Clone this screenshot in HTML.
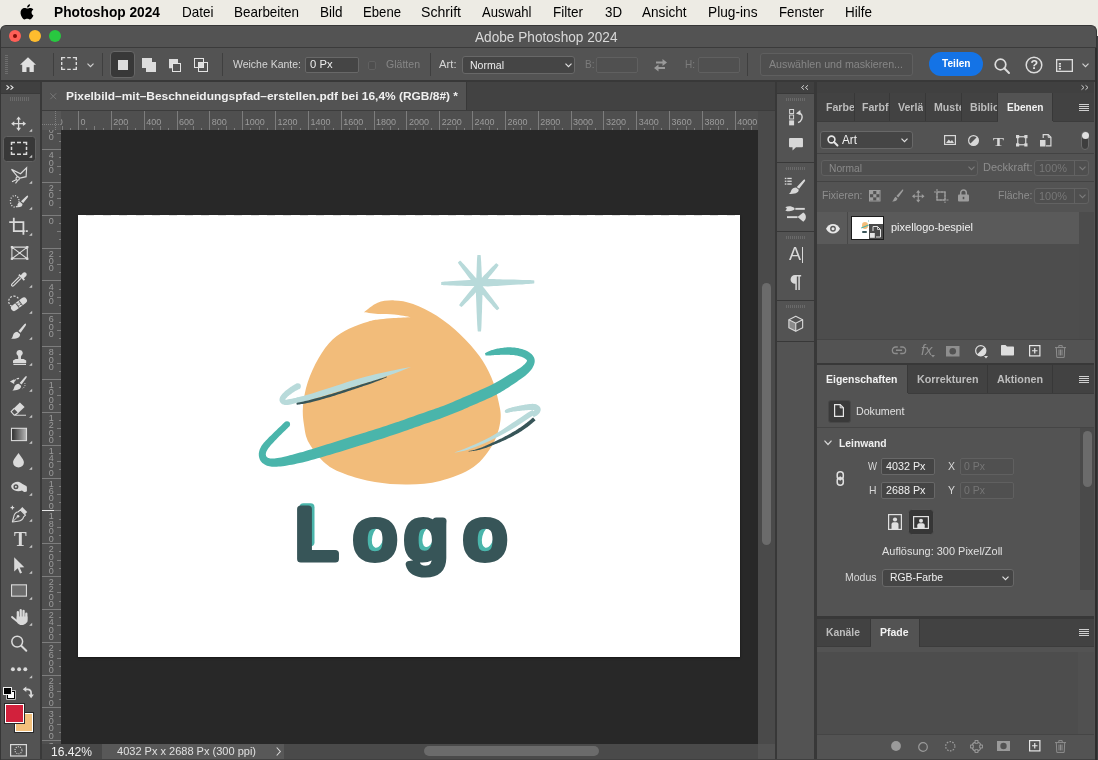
<!DOCTYPE html>
<html lang="de">
<head>
<meta charset="utf-8">
<title>Adobe Photoshop 2024</title>
<style>
*{box-sizing:border-box;margin:0;padding:0}
html,body{width:1098px;height:760px;overflow:hidden;background:#3c3c3e}
body{font-family:"Liberation Sans",sans-serif;font-size:11px;color:#d6d6d6;position:relative}
div,span,i{position:absolute}
svg{position:absolute;overflow:visible}
.inp{background:#454545;border:1px solid #686868;border-radius:2px}
.inp.dis{background:#505050;border-color:#606060}
.clip{overflow:hidden}
#root{left:0;top:0;width:1098px;height:760px;will-change:transform}

</style>
</head>
<body>
<div id="root">
<div style="position:absolute;left:0px;top:0px;width:1098px;height:36px;background:#edebe4;"></div>
<svg style="left:20.5px;top:3.5px;" width="13.5" height="16" viewBox="0 0 15 18"><path fill="#000" d="M10.1 0.3c0.1 1-0.3 1.900-0.900 2.600C8.600 3.600 7.700 4.100 6.800 4c-0.100-0.900 0.400-1.900 0.900-2.500C8.300 0.800 9.300 0.300 10.100 0.300zM13.900 12.800c-0.400 0.900-0.600 1.300-1.100 2.100-0.700 1.100-1.700 2.500-3 2.500-1.100 0-1.400-0.700-2.900-0.700-1.500 0-1.900 0.700-3 0.700-1.300 0-2.200-1.200-2.900-2.400C-0.900 11.900-1.100 8.200 0.300 6.400 1.200 5.100 2.600 4.400 3.900 4.400c1.400 0 2.200 0.700 3.300 0.700 1.100 0 1.800-0.700 3.300-0.700 1.200 0 2.400 0.600 3.300 1.700-2.900 1.600-2.400 5.700 0.100 6.700z"/></svg>
<span style="position:absolute;left:54px;top:3.1px;font-size:14.3px;line-height:18px;color:#000;white-space:nowrap;font-weight:bold;transform:scaleX(0.9597);transform-origin:0 50%;">Photoshop 2024</span>
<span style="position:absolute;left:182px;top:3.1px;font-size:14.3px;line-height:18px;color:#000;white-space:nowrap;transform:scaleX(0.9436);transform-origin:0 50%;">Datei</span>
<span style="position:absolute;left:234px;top:3.1px;font-size:14.3px;line-height:18px;color:#000;white-space:nowrap;transform:scaleX(0.9397);transform-origin:0 50%;">Bearbeiten</span>
<span style="position:absolute;left:320px;top:3.1px;font-size:14.3px;line-height:18px;color:#000;white-space:nowrap;transform:scaleX(0.9436);transform-origin:0 50%;">Bild</span>
<span style="position:absolute;left:362.5px;top:3.1px;font-size:14.3px;line-height:18px;color:#000;white-space:nowrap;transform:scaleX(0.9190);transform-origin:0 50%;">Ebene</span>
<span style="position:absolute;left:420.5px;top:3.1px;font-size:14.3px;line-height:18px;color:#000;white-space:nowrap;transform:scaleX(0.9870);transform-origin:0 50%;">Schrift</span>
<span style="position:absolute;left:481.5px;top:3.1px;font-size:14.3px;line-height:18px;color:#000;white-space:nowrap;transform:scaleX(0.9158);transform-origin:0 50%;">Auswahl</span>
<span style="position:absolute;left:553px;top:3.1px;font-size:14.3px;line-height:18px;color:#000;white-space:nowrap;transform:scaleX(0.9441);transform-origin:0 50%;">Filter</span>
<span style="position:absolute;left:604.5px;top:3.1px;font-size:14.3px;line-height:18px;color:#000;white-space:nowrap;transform:scaleX(0.9300);transform-origin:0 50%;">3D</span>
<span style="position:absolute;left:642px;top:3.1px;font-size:14.3px;line-height:18px;color:#000;white-space:nowrap;transform:scaleX(0.9489);transform-origin:0 50%;">Ansicht</span>
<span style="position:absolute;left:708px;top:3.1px;font-size:14.3px;line-height:18px;color:#000;white-space:nowrap;transform:scaleX(0.9581);transform-origin:0 50%;">Plug-ins</span>
<span style="position:absolute;left:779px;top:3.1px;font-size:14.3px;line-height:18px;color:#000;white-space:nowrap;transform:scaleX(0.9282);transform-origin:0 50%;">Fenster</span>
<span style="position:absolute;left:844.5px;top:3.1px;font-size:14.3px;line-height:18px;color:#000;white-space:nowrap;transform:scaleX(0.9438);transform-origin:0 50%;">Hilfe</span>
<div style="position:absolute;left:0px;top:24.5px;width:1096.7px;height:735.5px;background:#535353;border-radius:6px 6px 0 0;border:1px solid #363636;border-bottom:none"></div>
<div style="position:absolute;left:1px;top:47px;width:1095px;height:1px;background:#3b3b3b;"></div>
<div style="position:absolute;left:9px;top:30px;width:12px;height:12px;background:#fe5f57;border-radius:50%"></div>
<div style="position:absolute;left:29px;top:30px;width:12px;height:12px;background:#febc2e;border-radius:50%"></div>
<div style="position:absolute;left:49px;top:30px;width:12px;height:12px;background:#28c840;border-radius:50%"></div>
<div style="position:absolute;left:13px;top:34px;width:4px;height:4px;background:#7c0d08;border-radius:50%"></div>
<span style="position:absolute;left:475px;top:27.8px;font-size:14px;line-height:18px;color:#d9d9d9;white-space:nowrap;transform:scaleX(0.9737);transform-origin:0 50%;">Adobe Photoshop 2024</span>
<div style="position:absolute;left:1px;top:80px;width:1095px;height:2px;background:#383838;"></div>
<div style="position:absolute;left:5px;top:55px;width:3px;height:20px;background:transparent;background:repeating-linear-gradient(#6e6e6e 0 1px,transparent 1px 2px)"></div>
<svg style="left:20px;top:57px;" width="16" height="15" viewBox="0 0 16 15"><path fill="#e0e0e0" d="M8 0.300 0 7.800h2.200v7.200h4.300v-4.800h3v4.800h4.300V7.800H16z"/></svg>
<div style="position:absolute;left:53px;top:53px;width:1px;height:23px;background:#3f3f3f;"></div>
<svg style="left:0;top:0" width="100" height="80" viewBox="0 0 100 80"><path d="M61.0 57.6h4.2M67.2 57.6h3.60M72.8 57.6h4.2M61.0 69.4h4.2M67.2 69.4h3.60M72.8 69.4h4.2M61.7 57.6v2.6M61.7 61.90v3.20M61.7 66.80v2.6M76.3 57.6v2.6M76.3 61.90v3.20M76.3 66.80v2.6" fill="none" stroke="#dcdcdc" stroke-width="1.400"/></svg>
<svg style="left:87px;top:63px;" width="7" height="5" viewBox="0 0 7 5"><path d="M0.500 0.700 3.500 3.700 6.500 0.700" fill="none" stroke="#d0d0d0" stroke-width="1.200"/></svg>
<div style="position:absolute;left:102px;top:53px;width:1px;height:23px;background:#3f3f3f;"></div>
<div style="position:absolute;left:110.2px;top:51px;width:25.2px;height:26.8px;background:#383838;border-radius:4px;border:1px solid #676767"></div>
<div style="position:absolute;left:118px;top:60px;width:10px;height:10px;background:#dcdcdc;"></div>
<svg style="left:0;top:0" width="230" height="82" viewBox="0 0 230 82"><path fill="#dcdcdc" d="M142 58h10v4h4v10h-10v-4h-4z"/><path fill="#dcdcdc" d="M169 59h9v4h-6v5.200h-3z"/><rect x="172.500" y="63.500" width="8" height="8" fill="none" stroke="#e4e4e4" stroke-width="1"/><rect x="194.500" y="58.500" width="9" height="9" fill="none" stroke="#e4e4e4" stroke-width="1"/><rect x="198.500" y="62.500" width="9" height="9" fill="none" stroke="#e4e4e4" stroke-width="1"/><rect x="199" y="63" width="4" height="4" fill="#dcdcdc"/></svg>
<div style="position:absolute;left:222px;top:53px;width:1px;height:23px;background:#3f3f3f;"></div>
<span style="position:absolute;left:232.5px;top:56.8px;font-size:11px;line-height:14px;color:#d6d6d6;white-space:nowrap;transform:scaleX(0.9532);transform-origin:0 50%;">Weiche Kante:</span>
<div class="inp" style="position:absolute;left:305px;top:56.5px;width:54px;height:16.0px;background:#454545;"></div>
<span style="position:absolute;left:309.5px;top:56.8px;font-size:11px;line-height:14px;color:#ececec;white-space:nowrap;transform:scaleX(1.0222);transform-origin:0 50%;">0 Px</span>
<div style="position:absolute;left:367.5px;top:61px;width:8.5px;height:8.5px;background:#4e4e4e;border:1px solid #606060;border-radius:2px"></div>
<span style="position:absolute;left:385.5px;top:56.8px;font-size:11px;line-height:14px;color:#868686;white-space:nowrap;transform:scaleX(0.9587);transform-origin:0 50%;">Glätten</span>
<div style="position:absolute;left:430px;top:53px;width:1px;height:23px;background:#3f3f3f;"></div>
<span style="position:absolute;left:439px;top:56.8px;font-size:11px;line-height:14px;color:#d6d6d6;white-space:nowrap;transform:scaleX(1.0227);transform-origin:0 50%;">Art:</span>
<div class="inp" style="position:absolute;left:462px;top:55.5px;width:113px;height:18.0px;background:#454545;border-radius:3px"></div>
<span style="position:absolute;left:470px;top:57.5px;font-size:11.5px;line-height:15px;color:#ececec;white-space:nowrap;transform:scaleX(0.9174);transform-origin:0 50%;">Normal</span>
<svg style="left:565px;top:62.5px;" width="7" height="5" viewBox="0 0 7 5"><path d="M0.500 0.700 3.500 3.700 6.500 0.700" fill="none" stroke="#e0e0e0" stroke-width="1.200"/></svg>
<span style="position:absolute;left:585px;top:56.8px;font-size:11px;line-height:14px;color:#7c7c7c;white-space:nowrap;transform:scaleX(0.9141);transform-origin:0 50%;">B:</span>
<div class="inp dis" style="position:absolute;left:596px;top:56.5px;width:42px;height:16.0px;background:#505050;"></div>
<svg style="left:654px;top:58.5px;" width="13" height="12.5" viewBox="0 0 13 12.5"><path fill="#9a9a9a" d="M8.500 0 13 3.500 8.500 7V4.500H2v-2h6.500zM4.500 5.500 0 9l4.500 3.500V10H11V8H4.500z"/></svg>
<span style="position:absolute;left:685px;top:56.8px;font-size:11px;line-height:14px;color:#7c7c7c;white-space:nowrap;transform:scaleX(0.9091);transform-origin:0 50%;">H:</span>
<div class="inp dis" style="position:absolute;left:697.5px;top:56.5px;width:42.0px;height:16.0px;background:#505050;"></div>
<div style="position:absolute;left:747px;top:53px;width:1px;height:23px;background:#3f3f3f;"></div>
<div style="position:absolute;left:759.5px;top:53px;width:153.5px;height:23px;background:#4f4f4f;border:1px solid #5f5f5f;border-radius:3px"></div>
<span style="position:absolute;left:769px;top:56.8px;font-size:11px;line-height:14px;color:#868686;white-space:nowrap;transform:scaleX(0.9697);transform-origin:0 50%;">Auswählen und maskieren...</span>
<div style="position:absolute;left:929px;top:52px;width:54px;height:24px;background:#1473e6;border-radius:12px"></div>
<span style="position:absolute;left:941.5px;top:55.8px;font-size:11px;line-height:14px;color:#fff;white-space:nowrap;font-weight:bold;transform:scaleX(0.9203);transform-origin:0 50%;">Teilen</span>
<svg style="left:994px;top:57.5px;" width="16" height="16" viewBox="0 0 16 16"><circle cx="6.500" cy="6.500" r="5.300" fill="none" stroke="#dcdcdc" stroke-width="1.700"/><path d="M10.300 10.300 15 15" stroke="#dcdcdc" stroke-width="2" stroke-linecap="round"/></svg>
<svg style="left:1025px;top:56px;" width="18" height="18" viewBox="0 0 18 18"><circle cx="9" cy="9" r="7.800" fill="none" stroke="#dcdcdc" stroke-width="1.500"/></svg>
<span style="position:absolute;left:1030.6px;top:56.6px;font-size:12.5px;line-height:16px;color:#e4e4e4;white-space:nowrap;font-weight:bold;">?</span>
<svg style="left:1055.5px;top:58.5px;" width="17" height="13" viewBox="0 0 17 13"><rect x="0.650" y="0.650" width="15.700" height="11.700" fill="none" stroke="#dcdcdc" stroke-width="1.300"/><rect x="2.800" y="4" width="2.200" height="1.600" fill="#dcdcdc"/><rect x="2.800" y="6.500" width="2.200" height="1.600" fill="#dcdcdc"/><rect x="2.800" y="9" width="2.200" height="1.600" fill="#dcdcdc"/></svg>
<svg style="left:1081.5px;top:62.5px;" width="7" height="5" viewBox="0 0 7 5"><path d="M0.500 0.700 3.500 3.700 6.500 0.700" fill="none" stroke="#d0d0d0" stroke-width="1.200"/></svg>
<div style="position:absolute;left:1px;top:82px;width:38.5px;height:678px;background:#535353;"></div>
<div style="position:absolute;left:39.5px;top:82px;width:2.5px;height:678px;background:#393939;"></div>
<div style="position:absolute;left:1px;top:82px;width:38.5px;height:11px;background:#404040;"></div>
<div style="position:absolute;left:1px;top:93px;width:38.5px;height:1px;background:#3a3a3a;"></div>
<svg style="left:6px;top:85px;" width="8" height="5" viewBox="0 0 8 5"><path d="M0.500 0.300 3 2.500 0.500 4.700M4.500 0.300 7 2.500 4.500 4.700" fill="none" stroke="#e8e8e8" stroke-width="1.100"/></svg>
<div style="position:absolute;left:10px;top:97px;width:19px;height:4px;background:transparent;background:repeating-linear-gradient(90deg,#6a6a6a 0 1px,transparent 1px 2px)"></div>
<div style="position:absolute;left:3px;top:136px;width:33px;height:26px;background:#383838;border-radius:3.500px;border:1px solid #616161"></div>
<svg style="left:0;top:0" width="42" height="760" viewBox="0 0 42 760"><path d="M32.200 128.7v3.100h-3.100z" fill="#c4c4c4"/><path d="M32.200 154.7v3.100h-3.100z" fill="#c4c4c4"/><path d="M32.200 180.7v3.100h-3.100z" fill="#c4c4c4"/><path d="M32.200 206.7v3.100h-3.100z" fill="#c4c4c4"/><path d="M32.200 232.7v3.100h-3.100z" fill="#c4c4c4"/><path d="M32.200 284.7v3.100h-3.100z" fill="#c4c4c4"/><path d="M32.200 310.7v3.100h-3.100z" fill="#c4c4c4"/><path d="M32.200 336.7v3.100h-3.100z" fill="#c4c4c4"/><path d="M32.200 362.7v3.100h-3.100z" fill="#c4c4c4"/><path d="M32.200 388.7v3.100h-3.100z" fill="#c4c4c4"/><path d="M32.200 414.7v3.100h-3.100z" fill="#c4c4c4"/><path d="M32.200 440.7v3.100h-3.100z" fill="#c4c4c4"/><path d="M32.200 466.7v3.100h-3.100z" fill="#c4c4c4"/><path d="M32.200 492.7v3.100h-3.100z" fill="#c4c4c4"/><path d="M32.200 518.7v3.100h-3.100z" fill="#c4c4c4"/><path d="M32.200 544.7v3.100h-3.100z" fill="#c4c4c4"/><path d="M32.200 570.7v3.100h-3.100z" fill="#c4c4c4"/><path d="M32.200 596.7v3.100h-3.100z" fill="#c4c4c4"/><path d="M32.200 622.7v3.100h-3.100z" fill="#c4c4c4"/><path d="M32.200 675.2v3.100h-3.100z" fill="#c4c4c4"/><path d="M18.600 118.300V129.100M13.200 123.700H24" fill="none" stroke="#dadada" stroke-width="1.3" /><path d="M18.600 116.400 21 119.600H16.200zM18.600 131 21 127.800H16.200zM11.100 123.700 14.300 121.300V126.100zM26.100 123.700 22.900 121.300V126.100z" fill="#dadada" /><path d="M10.75 142.5h4.25M17.0 142.5h4.00M23.0 142.5h4.25M10.75 154.25h4.25M17.0 154.25h4.00M23.0 154.25h4.25M11.5 142.5v2.6M11.5 146.80v3.15M11.5 151.65v2.6M26.5 142.5v2.6M26.5 146.80v3.15M26.5 151.65v2.6" fill="none" stroke="#dadada" stroke-width="1.5" /><path d="M11.500 169.400 20.500 173.700 26.600 167.700 26.100 176.700 19 178.300z" fill="none" stroke="#dadada" stroke-width="1.2" stroke-linejoin="miter"/><path d="M16.600 179.600 12 181.700M17.800 180.300 15.500 183.400" fill="none" stroke="#dadada" stroke-width="1.1" /><circle cx="17.700" cy="178.600" r="1.700" fill="#535353" stroke="#dadada" stroke-width="1.100"/><ellipse cx="14.700" cy="201.300" rx="4.300" ry="5.700" fill="none" stroke="#dadada" stroke-width="1.300" stroke-dasharray="1.100 1.500"/><path d="M27.800 195.600c0.600 0.600 0.300 1.400-0.300 2.200l-4.300 5.300-2.200-1.900 5.300-5c0.500-0.500 1-0.500 1.500-0.600zM20.100 201.900l2.400 2.100c0.300 2.300-2.300 3.800-6.300 3.200 1.200-0.600 1.300-1.600 1.500-2.700 0.300-1.500 1.200-2.400 2.400-2.600z" fill="#dadada" /><path d="M13.800 217.800V231.100H24.800M9.200 222.200H23.400V234.800M25.700 231.100H27.800" fill="none" stroke="#dadada" stroke-width="1.8" /><path d="M11.900 247.100H27.300V258.800H11.900zM11.900 247.100 27.300 258.800M27.300 247.100 11.900 258.800" fill="none" stroke="#dadada" stroke-width="1.1" /><rect x="10.8" y="246.0" width="2.200" height="2.200" fill="#dadada"/><rect x="26.2" y="246.0" width="2.200" height="2.200" fill="#dadada"/><rect x="10.8" y="257.7" width="2.200" height="2.200" fill="#dadada"/><rect x="26.2" y="257.7" width="2.200" height="2.200" fill="#dadada"/><path d="M19.300 276.800 12.300 283.600c-0.900 0.900-0.900 1.700-0.500 2.100 0.400 0.400 1.300 0.400 2.100-0.400l7-7" fill="none" stroke="#dadada" stroke-width="1.2" /><path d="M18.300 275.200l1.200-1.200 1.300 1.200 2-2.100c1-1 2.400-1.100 3.300-0.200 0.900 0.900 0.800 2.300-0.200 3.300l-2.100 2 1.200 1.300-1.200 1.200z" fill="#dadada" /><path d="M18.300 298.300A5.300 5.300 0 1 0 12.600 306.500" fill="none" stroke="#dadada" stroke-width="1.200" stroke-dasharray="2 1.400"/><g transform="rotate(-37 19 304.200)"><rect x="9.800" y="301.100" width="18.400" height="6.200" rx="3.100" fill="#dadada"/><g fill="#535353"><rect x="16.600" y="301.100" width="0.900" height="6.200"/><rect x="20.600" y="301.100" width="0.900" height="6.200"/><circle cx="18.200" cy="303.200" r="0.550"/><circle cx="19.900" cy="303.200" r="0.550"/><circle cx="18.200" cy="305.300" r="0.550"/><circle cx="19.900" cy="305.300" r="0.550"/></g></g><path d="M25.700 323.600c0.600 0.500 0.400 1.300-0.100 2.100l-5 7.100-2.200-1.800 5.900-6.700c0.500-0.500 0.900-0.600 1.400-0.700zM17.300 331.700l2.700 2.300c0.700 2.900-2.600 5.300-9.100 4.800 1.500-0.700 1.700-2.200 2.100-3.600 0.600-2.200 2.300-3.500 4.300-3.500z" fill="#dadada" /><path d="M19.600 350a3.100 3.100 0 0 1 1.900 5.600c-0.500 0.500-0.600 1.500-0.500 3.300h2.600l2.600 1.500v2.500H13v-2.500l2.600-1.500h2.600c0.100-1.800 0-2.800-0.500-3.300A3.100 3.100 0 0 1 19.600 350zM13.400 363.700H26v1.300H13.400z" fill="#dadada" /><path d="M26.400 376.100c0.600 0.500 0.300 1.200-0.100 1.900l-4.700 6.600-2-1.700 5.500-6.200c0.400-0.500 0.800-0.500 1.300-0.600zM18.600 383.700l2.400 2.100c0.600 2.600-2.400 4.900-8.700 4.600 1.400-0.700 1.600-2 2-3.400 0.600-2 2.300-3.300 4.300-3.300z" fill="#dadada" /><path d="M9.900 381.600 14.200 379.200v4.800z" fill="#dadada" /><path d="M14.200 381.600c0.700-2.200 2.400-3.200 5.700-3.200" fill="none" stroke="#dadada" stroke-width="1.2" stroke-dasharray="2.600 1.100"/><path d="M24.700 383c1.100 1.800 0 4.300-2.600 6" fill="none" stroke="#dadada" stroke-width="1" stroke-dasharray="0.900 1.400"/><path d="M19.900 402.400 24.600 406.900 18.300 412.900 13.700 408.400z" fill="#dadada" /><path d="M14.200 408.500 11.100 411.700 14.400 415.300H26M14.400 415.300 18.300 412.500" fill="none" stroke="#dadada" stroke-width="1.1" stroke-linejoin="round"/><defs><linearGradient id="gr1" x1="0" x2="1" y1="0" y2="0"><stop offset="0" stop-color="#2a2a2a"/><stop offset="1" stop-color="#b8b8b8"/></linearGradient></defs><rect x="11.500" y="428.300" width="15" height="12.300" fill="url(#gr1)" stroke="#dadada" stroke-width="1.100"/><path d="M18.500 452.900c2.200 3.800 5.400 6.200 5.400 9.500a5.400 5.100 0 0 1-10.800 0c0-3.300 3.200-5.700 5.400-9.500z" fill="#dadada" /><path d="M11.400 485.300c1.200-2.400 4-3.600 6.600-3.500 1.700 0.100 2.700 1.100 4.100 1.900l3.700 2c0.800 0.400 1.100 0.900 1.100 1.800v3.800c-0.800 0.900-2.300 1-3.200 0.500l-1.700-1.300c-1.900 0.800-4.800 1.100-7.200 0.100-2.500-1-4.200-3.200-3.400-5.300z" fill="#dadada" /><circle cx="15.900" cy="486.800" r="2.500" fill="#535353"/><circle cx="15.900" cy="486.800" r="1" fill="#dadada"/><path d="M10.600 507.600H14.200M12.400 505.800V509.400" fill="none" stroke="#dadada" stroke-width="1.1" /><path d="M20.300 509.900 25.500 515.100 23.600 516.900c-0.500 2.500-2.300 3.900-5.700 4.300L12.400 522l1.300-5.100c0.600-3.200 2-4.800 4.600-5.200z" fill="none" stroke="#dadada" stroke-width="1.15" stroke-linejoin="round"/><path d="M12.800 521.600 17.500 516.900" fill="none" stroke="#dadada" stroke-width="1" /><circle cx="18.100" cy="516.300" r="1.300" fill="#dadada"/><path d="M20 509.400l2.300-2.300 4.900 4.900-2.300 2.300z" fill="#dadada" /><path d="M14.200 557.300V571.500L17.700 568.300 20 573.600 22 572.700 19.700 567.500 24.300 567.200z" fill="#dadada" /><rect x="11.550" y="584.850" width="14.900" height="11.300" fill="#6c6c6c" stroke="#dadada" stroke-width="1.100"/><rect x="16.7" y="610.9" width="2.300" height="10" rx="1.150" fill="#dadada"/><rect x="19.55" y="608.9" width="2.300" height="10" rx="1.150" fill="#dadada"/><rect x="22.4" y="609.8" width="2.300" height="10" rx="1.150" fill="#dadada"/><rect x="25.15" y="612.6" width="2.300" height="10" rx="1.150" fill="#dadada"/><path d="M16.700 616.500H27.450V619c0 3.700-2.300 6-5.500 6-2.400 0-3.800-0.900-5.100-2.800L11.300 617.700c-0.700-1.200 0.500-2.200 1.600-1.300l3.800 3.400z" fill="#dadada" /><circle cx="17.200" cy="641.600" r="5.400" fill="none" stroke="#dadada" stroke-width="1.500"/><path d="M21.200 645.700 26.300 650.800" fill="none" stroke="#dadada" stroke-width="2" stroke-linecap="round"/><circle cx="12.9" cy="669.200" r="1.950" fill="#dadada"/><circle cx="19.1" cy="669.200" r="1.950" fill="#dadada"/><circle cx="25.3" cy="669.200" r="1.950" fill="#dadada"/><path d="M25.500 689.300h2c2.500 0 3.600 1.500 3.600 3.700v2" fill="none" stroke="#dadada" stroke-width="1.7" /><path d="M22.800 689.300 26.300 686.600V692zM31.100 698.200 28.300 694.600H33.900z" fill="#dadada" /></svg>
<span style="position:absolute;left:13.9px;top:528.3px;font-size:21px;line-height:22px;color:#dadada;white-space:nowrap;font-weight:bold;transform:scaleX(0.9043);transform-origin:0 50%;font-family:'Liberation Serif',serif;">T</span>
<div style="position:absolute;left:7.2px;top:691.3px;width:7.6px;height:7.4px;background:#fff;border:1px solid #000;box-shadow:0 0 0 0.700px #e8e8e8"></div>
<div style="position:absolute;left:3.3px;top:687.4px;width:8.3px;height:8.0px;background:#000;border:1px solid #f0f0f0"></div>
<div style="position:absolute;left:14.5px;top:713.4px;width:18.9px;height:19.0px;background:#f3c07c;border:1.200px solid #fff;box-shadow:0 0 0 1px #2a2a2a"></div>
<div style="position:absolute;left:4.6px;top:703.8px;width:19.1px;height:18.8px;background:#d2213c;border:1.200px solid #fff;box-shadow:0 0 0 1px #2a2a2a"></div>
<svg style="left:10.3px;top:744.2px;" width="17" height="12.6" viewBox="0 0 17 12.6"><rect x="0.600" y="0.600" width="15.800" height="11.400" fill="none" stroke="#dadada" stroke-width="1.200"/><circle cx="8.500" cy="6.300" r="3.500" fill="none" stroke="#dadada" stroke-width="1.100" stroke-dasharray="1 1.200"/></svg>
<div style="position:absolute;left:42px;top:82px;width:732.5px;height:28px;background:#424242;"></div>
<div style="position:absolute;left:42px;top:82px;width:424px;height:28px;background:#535353;"></div>
<div style="position:absolute;left:466px;top:82px;width:1px;height:28px;background:#383838;"></div>
<div style="position:absolute;left:42px;top:109.5px;width:732.5px;height:1.0px;background:#3c3c3c;"></div>
<svg style="left:50px;top:93px;" width="6.5" height="6.5" viewBox="0 0 6.5 6.5"><path d="M0.300 0.300 6.200 6.200M6.200 0.300 0.300 6.200" stroke="#7e7e7e" stroke-width="0.800"/></svg>
<span style="position:absolute;left:66px;top:88.8px;font-size:11.5px;line-height:15px;color:#f0f0f0;white-space:nowrap;font-weight:bold;transform:scaleX(1.0379);transform-origin:0 50%;">Pixelbild&#8211;mit&#8211;Beschneidungspfad&#8211;erstellen.pdf bei 16,4% (RGB/8#) *</span>
<div style="position:absolute;left:61px;top:130px;width:697px;height:613.5px;background:#282828;"></div>
<div style="position:absolute;left:78px;top:215px;width:662px;height:442px;background:#ffffff;box-shadow:0 1px 2px rgba(0,0,0,0.500)"></div>
<div style="position:absolute;left:78px;top:215px;width:662px;height:1px;background:transparent;background:repeating-linear-gradient(90deg,transparent 0 8.400px,#e2e2e2 8.400px 16.420px)"></div>
<div style="position:absolute;left:61px;top:110.5px;width:697px;height:19.5px;background:#4f4f4f;"></div>
<div style="position:absolute;left:42px;top:130px;width:19px;height:613.5px;background:#4f4f4f;"></div>
<div class="clip" style="left:61px;top:0;width:697px;height:131px"><div style="left:-61px;top:0"><div style="position:absolute;left:61.58px;top:126px;width:1.0px;height:4px;background:#7d7d7d;"></div><div style="position:absolute;left:69.79px;top:128px;width:1.0px;height:2px;background:#7d7d7d;"></div><div style="position:absolute;left:78.0px;top:110.5px;width:1.0px;height:19.5px;background:#7d7d7d;"></div><div style="position:absolute;left:86.21px;top:128px;width:1.0px;height:2px;background:#7d7d7d;"></div><div style="position:absolute;left:94.42px;top:126px;width:1.0px;height:4px;background:#7d7d7d;"></div><div style="position:absolute;left:102.63px;top:128px;width:1.0px;height:2px;background:#7d7d7d;"></div><div style="position:absolute;left:110.84px;top:110.5px;width:1.0px;height:19.5px;background:#7d7d7d;"></div><div style="position:absolute;left:119.05px;top:128px;width:1.0px;height:2px;background:#7d7d7d;"></div><div style="position:absolute;left:127.26px;top:126px;width:1.0px;height:4px;background:#7d7d7d;"></div><div style="position:absolute;left:135.47px;top:128px;width:1.0px;height:2px;background:#7d7d7d;"></div><div style="position:absolute;left:143.68px;top:110.5px;width:1.0px;height:19.5px;background:#7d7d7d;"></div><div style="position:absolute;left:151.89px;top:128px;width:1.0px;height:2px;background:#7d7d7d;"></div><div style="position:absolute;left:160.1px;top:126px;width:1.0px;height:4px;background:#7d7d7d;"></div><div style="position:absolute;left:168.31px;top:128px;width:1.0px;height:2px;background:#7d7d7d;"></div><div style="position:absolute;left:176.52px;top:110.5px;width:1.0px;height:19.5px;background:#7d7d7d;"></div><div style="position:absolute;left:184.73px;top:128px;width:1.0px;height:2px;background:#7d7d7d;"></div><div style="position:absolute;left:192.94px;top:126px;width:1.0px;height:4px;background:#7d7d7d;"></div><div style="position:absolute;left:201.15px;top:128px;width:1.0px;height:2px;background:#7d7d7d;"></div><div style="position:absolute;left:209.36px;top:110.5px;width:1.0px;height:19.5px;background:#7d7d7d;"></div><div style="position:absolute;left:217.57px;top:128px;width:1.0px;height:2px;background:#7d7d7d;"></div><div style="position:absolute;left:225.78px;top:126px;width:1.0px;height:4px;background:#7d7d7d;"></div><div style="position:absolute;left:233.99px;top:128px;width:1.0px;height:2px;background:#7d7d7d;"></div><div style="position:absolute;left:242.2px;top:110.5px;width:1.0px;height:19.5px;background:#7d7d7d;"></div><div style="position:absolute;left:250.41px;top:128px;width:1.0px;height:2px;background:#7d7d7d;"></div><div style="position:absolute;left:258.62px;top:126px;width:1.0px;height:4px;background:#7d7d7d;"></div><div style="position:absolute;left:266.83px;top:128px;width:1.0px;height:2px;background:#7d7d7d;"></div><div style="position:absolute;left:275.04px;top:110.5px;width:1.0px;height:19.5px;background:#7d7d7d;"></div><div style="position:absolute;left:283.25px;top:128px;width:1.0px;height:2px;background:#7d7d7d;"></div><div style="position:absolute;left:291.46px;top:126px;width:1.0px;height:4px;background:#7d7d7d;"></div><div style="position:absolute;left:299.67px;top:128px;width:1.0px;height:2px;background:#7d7d7d;"></div><div style="position:absolute;left:307.88px;top:110.5px;width:1.0px;height:19.5px;background:#7d7d7d;"></div><div style="position:absolute;left:316.09px;top:128px;width:1.0px;height:2px;background:#7d7d7d;"></div><div style="position:absolute;left:324.3px;top:126px;width:1.0px;height:4px;background:#7d7d7d;"></div><div style="position:absolute;left:332.51px;top:128px;width:1.0px;height:2px;background:#7d7d7d;"></div><div style="position:absolute;left:340.72px;top:110.5px;width:1.0px;height:19.5px;background:#7d7d7d;"></div><div style="position:absolute;left:348.93px;top:128px;width:1.0px;height:2px;background:#7d7d7d;"></div><div style="position:absolute;left:357.14px;top:126px;width:1.0px;height:4px;background:#7d7d7d;"></div><div style="position:absolute;left:365.35px;top:128px;width:1.0px;height:2px;background:#7d7d7d;"></div><div style="position:absolute;left:373.56px;top:110.5px;width:1.0px;height:19.5px;background:#7d7d7d;"></div><div style="position:absolute;left:381.77px;top:128px;width:1.0px;height:2px;background:#7d7d7d;"></div><div style="position:absolute;left:389.98px;top:126px;width:1.0px;height:4px;background:#7d7d7d;"></div><div style="position:absolute;left:398.19px;top:128px;width:1.0px;height:2px;background:#7d7d7d;"></div><div style="position:absolute;left:406.4px;top:110.5px;width:1.0px;height:19.5px;background:#7d7d7d;"></div><div style="position:absolute;left:414.61px;top:128px;width:1.0px;height:2px;background:#7d7d7d;"></div><div style="position:absolute;left:422.82px;top:126px;width:1.0px;height:4px;background:#7d7d7d;"></div><div style="position:absolute;left:431.03px;top:128px;width:1.0px;height:2px;background:#7d7d7d;"></div><div style="position:absolute;left:439.24px;top:110.5px;width:1.0px;height:19.5px;background:#7d7d7d;"></div><div style="position:absolute;left:447.45px;top:128px;width:1.0px;height:2px;background:#7d7d7d;"></div><div style="position:absolute;left:455.66px;top:126px;width:1.0px;height:4px;background:#7d7d7d;"></div><div style="position:absolute;left:463.87px;top:128px;width:1.0px;height:2px;background:#7d7d7d;"></div><div style="position:absolute;left:472.08px;top:110.5px;width:1.0px;height:19.5px;background:#7d7d7d;"></div><div style="position:absolute;left:480.29px;top:128px;width:1.0px;height:2px;background:#7d7d7d;"></div><div style="position:absolute;left:488.5px;top:126px;width:1.0px;height:4px;background:#7d7d7d;"></div><div style="position:absolute;left:496.71px;top:128px;width:1.0px;height:2px;background:#7d7d7d;"></div><div style="position:absolute;left:504.92px;top:110.5px;width:1.0px;height:19.5px;background:#7d7d7d;"></div><div style="position:absolute;left:513.13px;top:128px;width:1.0px;height:2px;background:#7d7d7d;"></div><div style="position:absolute;left:521.34px;top:126px;width:1.0px;height:4px;background:#7d7d7d;"></div><div style="position:absolute;left:529.55px;top:128px;width:1.0px;height:2px;background:#7d7d7d;"></div><div style="position:absolute;left:537.76px;top:110.5px;width:1.0px;height:19.5px;background:#7d7d7d;"></div><div style="position:absolute;left:545.97px;top:128px;width:1.0px;height:2px;background:#7d7d7d;"></div><div style="position:absolute;left:554.18px;top:126px;width:1.0px;height:4px;background:#7d7d7d;"></div><div style="position:absolute;left:562.39px;top:128px;width:1.0px;height:2px;background:#7d7d7d;"></div><div style="position:absolute;left:570.6px;top:110.5px;width:1.0px;height:19.5px;background:#7d7d7d;"></div><div style="position:absolute;left:578.81px;top:128px;width:1.0px;height:2px;background:#7d7d7d;"></div><div style="position:absolute;left:587.02px;top:126px;width:1.0px;height:4px;background:#7d7d7d;"></div><div style="position:absolute;left:595.23px;top:128px;width:1.0px;height:2px;background:#7d7d7d;"></div><div style="position:absolute;left:603.44px;top:110.5px;width:1.0px;height:19.5px;background:#7d7d7d;"></div><div style="position:absolute;left:611.65px;top:128px;width:1.0px;height:2px;background:#7d7d7d;"></div><div style="position:absolute;left:619.86px;top:126px;width:1.0px;height:4px;background:#7d7d7d;"></div><div style="position:absolute;left:628.07px;top:128px;width:1.0px;height:2px;background:#7d7d7d;"></div><div style="position:absolute;left:636.28px;top:110.5px;width:1.0px;height:19.5px;background:#7d7d7d;"></div><div style="position:absolute;left:644.49px;top:128px;width:1.0px;height:2px;background:#7d7d7d;"></div><div style="position:absolute;left:652.7px;top:126px;width:1.0px;height:4px;background:#7d7d7d;"></div><div style="position:absolute;left:660.91px;top:128px;width:1.0px;height:2px;background:#7d7d7d;"></div><div style="position:absolute;left:669.12px;top:110.5px;width:1.0px;height:19.5px;background:#7d7d7d;"></div><div style="position:absolute;left:677.33px;top:128px;width:1.0px;height:2px;background:#7d7d7d;"></div><div style="position:absolute;left:685.54px;top:126px;width:1.0px;height:4px;background:#7d7d7d;"></div><div style="position:absolute;left:693.75px;top:128px;width:1.0px;height:2px;background:#7d7d7d;"></div><div style="position:absolute;left:701.96px;top:110.5px;width:1.0px;height:19.5px;background:#7d7d7d;"></div><div style="position:absolute;left:710.17px;top:128px;width:1.0px;height:2px;background:#7d7d7d;"></div><div style="position:absolute;left:718.38px;top:126px;width:1.0px;height:4px;background:#7d7d7d;"></div><div style="position:absolute;left:726.59px;top:128px;width:1.0px;height:2px;background:#7d7d7d;"></div><div style="position:absolute;left:734.8px;top:110.5px;width:1.0px;height:19.5px;background:#7d7d7d;"></div><div style="position:absolute;left:743.01px;top:128px;width:1.0px;height:2px;background:#7d7d7d;"></div><div style="position:absolute;left:751.22px;top:126px;width:1.0px;height:4px;background:#7d7d7d;"></div><span style="position:absolute;left:47.66px;top:116.8px;font-size:9px;line-height:11px;color:#9c9c9c;white-space:nowrap;">200</span><span style="position:absolute;left:80.5px;top:116.8px;font-size:9px;line-height:11px;color:#9c9c9c;white-space:nowrap;">0</span><span style="position:absolute;left:113.34px;top:116.8px;font-size:9px;line-height:11px;color:#9c9c9c;white-space:nowrap;">200</span><span style="position:absolute;left:146.18px;top:116.8px;font-size:9px;line-height:11px;color:#9c9c9c;white-space:nowrap;">400</span><span style="position:absolute;left:179.02px;top:116.8px;font-size:9px;line-height:11px;color:#9c9c9c;white-space:nowrap;">600</span><span style="position:absolute;left:211.86px;top:116.8px;font-size:9px;line-height:11px;color:#9c9c9c;white-space:nowrap;">800</span><span style="position:absolute;left:244.7px;top:116.8px;font-size:9px;line-height:11px;color:#9c9c9c;white-space:nowrap;">1000</span><span style="position:absolute;left:277.54px;top:116.8px;font-size:9px;line-height:11px;color:#9c9c9c;white-space:nowrap;">1200</span><span style="position:absolute;left:310.38px;top:116.8px;font-size:9px;line-height:11px;color:#9c9c9c;white-space:nowrap;">1400</span><span style="position:absolute;left:343.22px;top:116.8px;font-size:9px;line-height:11px;color:#9c9c9c;white-space:nowrap;">1600</span><span style="position:absolute;left:376.06px;top:116.8px;font-size:9px;line-height:11px;color:#9c9c9c;white-space:nowrap;">1800</span><span style="position:absolute;left:408.9px;top:116.8px;font-size:9px;line-height:11px;color:#9c9c9c;white-space:nowrap;">2000</span><span style="position:absolute;left:441.74px;top:116.8px;font-size:9px;line-height:11px;color:#9c9c9c;white-space:nowrap;">2200</span><span style="position:absolute;left:474.58px;top:116.8px;font-size:9px;line-height:11px;color:#9c9c9c;white-space:nowrap;">2400</span><span style="position:absolute;left:507.42px;top:116.8px;font-size:9px;line-height:11px;color:#9c9c9c;white-space:nowrap;">2600</span><span style="position:absolute;left:540.26px;top:116.8px;font-size:9px;line-height:11px;color:#9c9c9c;white-space:nowrap;">2800</span><span style="position:absolute;left:573.1px;top:116.8px;font-size:9px;line-height:11px;color:#9c9c9c;white-space:nowrap;">3000</span><span style="position:absolute;left:605.94px;top:116.8px;font-size:9px;line-height:11px;color:#9c9c9c;white-space:nowrap;">3200</span><span style="position:absolute;left:638.78px;top:116.8px;font-size:9px;line-height:11px;color:#9c9c9c;white-space:nowrap;">3400</span><span style="position:absolute;left:671.62px;top:116.8px;font-size:9px;line-height:11px;color:#9c9c9c;white-space:nowrap;">3600</span><span style="position:absolute;left:704.46px;top:116.8px;font-size:9px;line-height:11px;color:#9c9c9c;white-space:nowrap;">3800</span><span style="position:absolute;left:737.3px;top:116.8px;font-size:9px;line-height:11px;color:#9c9c9c;white-space:nowrap;">4000</span><span style="position:absolute;left:770.14px;top:116.8px;font-size:9px;line-height:11px;color:#9c9c9c;white-space:nowrap;">4200</span></div></div>
<div class="clip" style="left:0;top:130px;width:62px;height:613.5px"><div style="left:0;top:-130px"><div style="position:absolute;left:57px;top:132.7px;width:4px;height:1.0px;background:#7d7d7d;"></div><div style="position:absolute;left:59px;top:140.91px;width:2px;height:1.0px;background:#7d7d7d;"></div><div style="position:absolute;left:42px;top:149.12px;width:19px;height:1.0px;background:#7d7d7d;"></div><div style="position:absolute;left:59px;top:157.33px;width:2px;height:1.0px;background:#7d7d7d;"></div><div style="position:absolute;left:57px;top:165.54px;width:4px;height:1.0px;background:#7d7d7d;"></div><div style="position:absolute;left:59px;top:173.75px;width:2px;height:1.0px;background:#7d7d7d;"></div><div style="position:absolute;left:42px;top:181.96px;width:19px;height:1.0px;background:#7d7d7d;"></div><div style="position:absolute;left:59px;top:190.17px;width:2px;height:1.0px;background:#7d7d7d;"></div><div style="position:absolute;left:57px;top:198.38px;width:4px;height:1.0px;background:#7d7d7d;"></div><div style="position:absolute;left:59px;top:206.59px;width:2px;height:1.0px;background:#7d7d7d;"></div><div style="position:absolute;left:42px;top:214.8px;width:19px;height:1.0px;background:#7d7d7d;"></div><div style="position:absolute;left:59px;top:223.01px;width:2px;height:1.0px;background:#7d7d7d;"></div><div style="position:absolute;left:57px;top:231.22px;width:4px;height:1.0px;background:#7d7d7d;"></div><div style="position:absolute;left:59px;top:239.43px;width:2px;height:1.0px;background:#7d7d7d;"></div><div style="position:absolute;left:42px;top:247.64px;width:19px;height:1.0px;background:#7d7d7d;"></div><div style="position:absolute;left:59px;top:255.85px;width:2px;height:1.0px;background:#7d7d7d;"></div><div style="position:absolute;left:57px;top:264.06px;width:4px;height:1.0px;background:#7d7d7d;"></div><div style="position:absolute;left:59px;top:272.27px;width:2px;height:1.0px;background:#7d7d7d;"></div><div style="position:absolute;left:42px;top:280.48px;width:19px;height:1.0px;background:#7d7d7d;"></div><div style="position:absolute;left:59px;top:288.69px;width:2px;height:1.0px;background:#7d7d7d;"></div><div style="position:absolute;left:57px;top:296.9px;width:4px;height:1.0px;background:#7d7d7d;"></div><div style="position:absolute;left:59px;top:305.11px;width:2px;height:1.0px;background:#7d7d7d;"></div><div style="position:absolute;left:42px;top:313.32px;width:19px;height:1.0px;background:#7d7d7d;"></div><div style="position:absolute;left:59px;top:321.53px;width:2px;height:1.0px;background:#7d7d7d;"></div><div style="position:absolute;left:57px;top:329.74px;width:4px;height:1.0px;background:#7d7d7d;"></div><div style="position:absolute;left:59px;top:337.95px;width:2px;height:1.0px;background:#7d7d7d;"></div><div style="position:absolute;left:42px;top:346.16px;width:19px;height:1.0px;background:#7d7d7d;"></div><div style="position:absolute;left:59px;top:354.37px;width:2px;height:1.0px;background:#7d7d7d;"></div><div style="position:absolute;left:57px;top:362.58px;width:4px;height:1.0px;background:#7d7d7d;"></div><div style="position:absolute;left:59px;top:370.79px;width:2px;height:1.0px;background:#7d7d7d;"></div><div style="position:absolute;left:42px;top:379.0px;width:19px;height:1.0px;background:#7d7d7d;"></div><div style="position:absolute;left:59px;top:387.21px;width:2px;height:1.0px;background:#7d7d7d;"></div><div style="position:absolute;left:57px;top:395.42px;width:4px;height:1.0px;background:#7d7d7d;"></div><div style="position:absolute;left:59px;top:403.63px;width:2px;height:1.0px;background:#7d7d7d;"></div><div style="position:absolute;left:42px;top:411.84px;width:19px;height:1.0px;background:#7d7d7d;"></div><div style="position:absolute;left:59px;top:420.05px;width:2px;height:1.0px;background:#7d7d7d;"></div><div style="position:absolute;left:57px;top:428.26px;width:4px;height:1.0px;background:#7d7d7d;"></div><div style="position:absolute;left:59px;top:436.47px;width:2px;height:1.0px;background:#7d7d7d;"></div><div style="position:absolute;left:42px;top:444.68px;width:19px;height:1.0px;background:#7d7d7d;"></div><div style="position:absolute;left:59px;top:452.89px;width:2px;height:1.0px;background:#7d7d7d;"></div><div style="position:absolute;left:57px;top:461.1px;width:4px;height:1.0px;background:#7d7d7d;"></div><div style="position:absolute;left:59px;top:469.31px;width:2px;height:1.0px;background:#7d7d7d;"></div><div style="position:absolute;left:42px;top:477.52px;width:19px;height:1.0px;background:#7d7d7d;"></div><div style="position:absolute;left:59px;top:485.73px;width:2px;height:1.0px;background:#7d7d7d;"></div><div style="position:absolute;left:57px;top:493.94px;width:4px;height:1.0px;background:#7d7d7d;"></div><div style="position:absolute;left:59px;top:502.15px;width:2px;height:1.0px;background:#7d7d7d;"></div><div style="position:absolute;left:42px;top:510.36px;width:19px;height:1.0px;background:#7d7d7d;"></div><div style="position:absolute;left:59px;top:518.57px;width:2px;height:1.0px;background:#7d7d7d;"></div><div style="position:absolute;left:57px;top:526.78px;width:4px;height:1.0px;background:#7d7d7d;"></div><div style="position:absolute;left:59px;top:534.99px;width:2px;height:1.0px;background:#7d7d7d;"></div><div style="position:absolute;left:42px;top:543.2px;width:19px;height:1.0px;background:#7d7d7d;"></div><div style="position:absolute;left:59px;top:551.41px;width:2px;height:1.0px;background:#7d7d7d;"></div><div style="position:absolute;left:57px;top:559.62px;width:4px;height:1.0px;background:#7d7d7d;"></div><div style="position:absolute;left:59px;top:567.83px;width:2px;height:1.0px;background:#7d7d7d;"></div><div style="position:absolute;left:42px;top:576.04px;width:19px;height:1.0px;background:#7d7d7d;"></div><div style="position:absolute;left:59px;top:584.25px;width:2px;height:1.0px;background:#7d7d7d;"></div><div style="position:absolute;left:57px;top:592.46px;width:4px;height:1.0px;background:#7d7d7d;"></div><div style="position:absolute;left:59px;top:600.67px;width:2px;height:1.0px;background:#7d7d7d;"></div><div style="position:absolute;left:42px;top:608.88px;width:19px;height:1.0px;background:#7d7d7d;"></div><div style="position:absolute;left:59px;top:617.09px;width:2px;height:1.0px;background:#7d7d7d;"></div><div style="position:absolute;left:57px;top:625.3px;width:4px;height:1.0px;background:#7d7d7d;"></div><div style="position:absolute;left:59px;top:633.51px;width:2px;height:1.0px;background:#7d7d7d;"></div><div style="position:absolute;left:42px;top:641.72px;width:19px;height:1.0px;background:#7d7d7d;"></div><div style="position:absolute;left:59px;top:649.93px;width:2px;height:1.0px;background:#7d7d7d;"></div><div style="position:absolute;left:57px;top:658.14px;width:4px;height:1.0px;background:#7d7d7d;"></div><div style="position:absolute;left:59px;top:666.35px;width:2px;height:1.0px;background:#7d7d7d;"></div><div style="position:absolute;left:42px;top:674.56px;width:19px;height:1.0px;background:#7d7d7d;"></div><div style="position:absolute;left:59px;top:682.77px;width:2px;height:1.0px;background:#7d7d7d;"></div><div style="position:absolute;left:57px;top:690.98px;width:4px;height:1.0px;background:#7d7d7d;"></div><div style="position:absolute;left:59px;top:699.19px;width:2px;height:1.0px;background:#7d7d7d;"></div><div style="position:absolute;left:42px;top:707.4px;width:19px;height:1.0px;background:#7d7d7d;"></div><div style="position:absolute;left:59px;top:715.61px;width:2px;height:1.0px;background:#7d7d7d;"></div><div style="position:absolute;left:57px;top:723.82px;width:4px;height:1.0px;background:#7d7d7d;"></div><div style="position:absolute;left:59px;top:732.03px;width:2px;height:1.0px;background:#7d7d7d;"></div><div style="position:absolute;left:42px;top:740.24px;width:19px;height:1.0px;background:#7d7d7d;"></div><span style="position:absolute;left:48.8px;top:84.54px;font-size:9px;line-height:10px;color:#9c9c9c;white-space:nowrap;">8</span><span style="position:absolute;left:48.8px;top:91.89px;font-size:9px;line-height:10px;color:#9c9c9c;white-space:nowrap;">0</span><span style="position:absolute;left:48.8px;top:99.24px;font-size:9px;line-height:10px;color:#9c9c9c;white-space:nowrap;">0</span><span style="position:absolute;left:48.8px;top:117.38px;font-size:9px;line-height:10px;color:#9c9c9c;white-space:nowrap;">6</span><span style="position:absolute;left:48.8px;top:124.73px;font-size:9px;line-height:10px;color:#9c9c9c;white-space:nowrap;">0</span><span style="position:absolute;left:48.8px;top:132.08px;font-size:9px;line-height:10px;color:#9c9c9c;white-space:nowrap;">0</span><span style="position:absolute;left:48.8px;top:150.22px;font-size:9px;line-height:10px;color:#9c9c9c;white-space:nowrap;">4</span><span style="position:absolute;left:48.8px;top:157.57px;font-size:9px;line-height:10px;color:#9c9c9c;white-space:nowrap;">0</span><span style="position:absolute;left:48.8px;top:164.92px;font-size:9px;line-height:10px;color:#9c9c9c;white-space:nowrap;">0</span><span style="position:absolute;left:48.8px;top:183.06px;font-size:9px;line-height:10px;color:#9c9c9c;white-space:nowrap;">2</span><span style="position:absolute;left:48.8px;top:190.41px;font-size:9px;line-height:10px;color:#9c9c9c;white-space:nowrap;">0</span><span style="position:absolute;left:48.8px;top:197.76px;font-size:9px;line-height:10px;color:#9c9c9c;white-space:nowrap;">0</span><span style="position:absolute;left:48.8px;top:215.9px;font-size:9px;line-height:10px;color:#9c9c9c;white-space:nowrap;">0</span><span style="position:absolute;left:48.8px;top:248.74px;font-size:9px;line-height:10px;color:#9c9c9c;white-space:nowrap;">2</span><span style="position:absolute;left:48.8px;top:256.09px;font-size:9px;line-height:10px;color:#9c9c9c;white-space:nowrap;">0</span><span style="position:absolute;left:48.8px;top:263.44px;font-size:9px;line-height:10px;color:#9c9c9c;white-space:nowrap;">0</span><span style="position:absolute;left:48.8px;top:281.58px;font-size:9px;line-height:10px;color:#9c9c9c;white-space:nowrap;">4</span><span style="position:absolute;left:48.8px;top:288.93px;font-size:9px;line-height:10px;color:#9c9c9c;white-space:nowrap;">0</span><span style="position:absolute;left:48.8px;top:296.28px;font-size:9px;line-height:10px;color:#9c9c9c;white-space:nowrap;">0</span><span style="position:absolute;left:48.8px;top:314.42px;font-size:9px;line-height:10px;color:#9c9c9c;white-space:nowrap;">6</span><span style="position:absolute;left:48.8px;top:321.77px;font-size:9px;line-height:10px;color:#9c9c9c;white-space:nowrap;">0</span><span style="position:absolute;left:48.8px;top:329.12px;font-size:9px;line-height:10px;color:#9c9c9c;white-space:nowrap;">0</span><span style="position:absolute;left:48.8px;top:347.26px;font-size:9px;line-height:10px;color:#9c9c9c;white-space:nowrap;">8</span><span style="position:absolute;left:48.8px;top:354.61px;font-size:9px;line-height:10px;color:#9c9c9c;white-space:nowrap;">0</span><span style="position:absolute;left:48.8px;top:361.96px;font-size:9px;line-height:10px;color:#9c9c9c;white-space:nowrap;">0</span><span style="position:absolute;left:48.8px;top:380.1px;font-size:9px;line-height:10px;color:#9c9c9c;white-space:nowrap;">1</span><span style="position:absolute;left:48.8px;top:387.45px;font-size:9px;line-height:10px;color:#9c9c9c;white-space:nowrap;">0</span><span style="position:absolute;left:48.8px;top:394.8px;font-size:9px;line-height:10px;color:#9c9c9c;white-space:nowrap;">0</span><span style="position:absolute;left:48.8px;top:402.15px;font-size:9px;line-height:10px;color:#9c9c9c;white-space:nowrap;">0</span><span style="position:absolute;left:48.8px;top:412.94px;font-size:9px;line-height:10px;color:#9c9c9c;white-space:nowrap;">1</span><span style="position:absolute;left:48.8px;top:420.29px;font-size:9px;line-height:10px;color:#9c9c9c;white-space:nowrap;">2</span><span style="position:absolute;left:48.8px;top:427.64px;font-size:9px;line-height:10px;color:#9c9c9c;white-space:nowrap;">0</span><span style="position:absolute;left:48.8px;top:434.99px;font-size:9px;line-height:10px;color:#9c9c9c;white-space:nowrap;">0</span><span style="position:absolute;left:48.8px;top:445.78px;font-size:9px;line-height:10px;color:#9c9c9c;white-space:nowrap;">1</span><span style="position:absolute;left:48.8px;top:453.13px;font-size:9px;line-height:10px;color:#9c9c9c;white-space:nowrap;">4</span><span style="position:absolute;left:48.8px;top:460.48px;font-size:9px;line-height:10px;color:#9c9c9c;white-space:nowrap;">0</span><span style="position:absolute;left:48.8px;top:467.83px;font-size:9px;line-height:10px;color:#9c9c9c;white-space:nowrap;">0</span><span style="position:absolute;left:48.8px;top:478.62px;font-size:9px;line-height:10px;color:#9c9c9c;white-space:nowrap;">1</span><span style="position:absolute;left:48.8px;top:485.97px;font-size:9px;line-height:10px;color:#9c9c9c;white-space:nowrap;">6</span><span style="position:absolute;left:48.8px;top:493.32px;font-size:9px;line-height:10px;color:#9c9c9c;white-space:nowrap;">0</span><span style="position:absolute;left:48.8px;top:500.67px;font-size:9px;line-height:10px;color:#9c9c9c;white-space:nowrap;">0</span><span style="position:absolute;left:48.8px;top:511.46px;font-size:9px;line-height:10px;color:#9c9c9c;white-space:nowrap;">1</span><span style="position:absolute;left:48.8px;top:518.81px;font-size:9px;line-height:10px;color:#9c9c9c;white-space:nowrap;">8</span><span style="position:absolute;left:48.8px;top:526.16px;font-size:9px;line-height:10px;color:#9c9c9c;white-space:nowrap;">0</span><span style="position:absolute;left:48.8px;top:533.51px;font-size:9px;line-height:10px;color:#9c9c9c;white-space:nowrap;">0</span><span style="position:absolute;left:48.8px;top:544.3px;font-size:9px;line-height:10px;color:#9c9c9c;white-space:nowrap;">2</span><span style="position:absolute;left:48.8px;top:551.65px;font-size:9px;line-height:10px;color:#9c9c9c;white-space:nowrap;">0</span><span style="position:absolute;left:48.8px;top:559.0px;font-size:9px;line-height:10px;color:#9c9c9c;white-space:nowrap;">0</span><span style="position:absolute;left:48.8px;top:566.35px;font-size:9px;line-height:10px;color:#9c9c9c;white-space:nowrap;">0</span><span style="position:absolute;left:48.8px;top:577.14px;font-size:9px;line-height:10px;color:#9c9c9c;white-space:nowrap;">2</span><span style="position:absolute;left:48.8px;top:584.49px;font-size:9px;line-height:10px;color:#9c9c9c;white-space:nowrap;">2</span><span style="position:absolute;left:48.8px;top:591.84px;font-size:9px;line-height:10px;color:#9c9c9c;white-space:nowrap;">0</span><span style="position:absolute;left:48.8px;top:599.19px;font-size:9px;line-height:10px;color:#9c9c9c;white-space:nowrap;">0</span><span style="position:absolute;left:48.8px;top:609.98px;font-size:9px;line-height:10px;color:#9c9c9c;white-space:nowrap;">2</span><span style="position:absolute;left:48.8px;top:617.33px;font-size:9px;line-height:10px;color:#9c9c9c;white-space:nowrap;">4</span><span style="position:absolute;left:48.8px;top:624.68px;font-size:9px;line-height:10px;color:#9c9c9c;white-space:nowrap;">0</span><span style="position:absolute;left:48.8px;top:632.03px;font-size:9px;line-height:10px;color:#9c9c9c;white-space:nowrap;">0</span><span style="position:absolute;left:48.8px;top:642.82px;font-size:9px;line-height:10px;color:#9c9c9c;white-space:nowrap;">2</span><span style="position:absolute;left:48.8px;top:650.17px;font-size:9px;line-height:10px;color:#9c9c9c;white-space:nowrap;">6</span><span style="position:absolute;left:48.8px;top:657.52px;font-size:9px;line-height:10px;color:#9c9c9c;white-space:nowrap;">0</span><span style="position:absolute;left:48.8px;top:664.87px;font-size:9px;line-height:10px;color:#9c9c9c;white-space:nowrap;">0</span><span style="position:absolute;left:48.8px;top:675.66px;font-size:9px;line-height:10px;color:#9c9c9c;white-space:nowrap;">2</span><span style="position:absolute;left:48.8px;top:683.01px;font-size:9px;line-height:10px;color:#9c9c9c;white-space:nowrap;">8</span><span style="position:absolute;left:48.8px;top:690.36px;font-size:9px;line-height:10px;color:#9c9c9c;white-space:nowrap;">0</span><span style="position:absolute;left:48.8px;top:697.71px;font-size:9px;line-height:10px;color:#9c9c9c;white-space:nowrap;">0</span><span style="position:absolute;left:48.8px;top:708.5px;font-size:9px;line-height:10px;color:#9c9c9c;white-space:nowrap;">3</span><span style="position:absolute;left:48.8px;top:715.85px;font-size:9px;line-height:10px;color:#9c9c9c;white-space:nowrap;">0</span><span style="position:absolute;left:48.8px;top:723.2px;font-size:9px;line-height:10px;color:#9c9c9c;white-space:nowrap;">0</span><span style="position:absolute;left:48.8px;top:730.55px;font-size:9px;line-height:10px;color:#9c9c9c;white-space:nowrap;">0</span><span style="position:absolute;left:48.8px;top:741.34px;font-size:9px;line-height:10px;color:#9c9c9c;white-space:nowrap;">3</span><span style="position:absolute;left:48.8px;top:748.69px;font-size:9px;line-height:10px;color:#9c9c9c;white-space:nowrap;">2</span><span style="position:absolute;left:48.8px;top:756.04px;font-size:9px;line-height:10px;color:#9c9c9c;white-space:nowrap;">0</span><span style="position:absolute;left:48.8px;top:763.39px;font-size:9px;line-height:10px;color:#9c9c9c;white-space:nowrap;">0</span></div></div>
<div style="position:absolute;left:42px;top:110.5px;width:19px;height:19.5px;background:#575757;"></div>
<div style="position:absolute;left:42px;top:124px;width:19px;height:1px;background:transparent;background:repeating-linear-gradient(90deg,#808080 0 1px,transparent 1px 2px)"></div>
<div style="position:absolute;left:55px;top:110.5px;width:1px;height:19.5px;background:transparent;background:repeating-linear-gradient(#808080 0 1px,transparent 1px 2px)"></div>
<div style="position:absolute;left:42px;top:509.5px;width:12px;height:1.5px;background:#e8e8e8;"></div>
<div style="position:absolute;left:758px;top:110.5px;width:16.5px;height:633.0px;background:#4a4a4a;"></div>
<div style="position:absolute;left:761.5px;top:283px;width:9.5px;height:262px;background:#6b6b6b;border-radius:5px"></div>
<div style="position:absolute;left:42px;top:743.5px;width:732.5px;height:16.5px;background:#4a4a4a;"></div>
<div style="position:absolute;left:42px;top:743.5px;width:60px;height:16.5px;background:#484848;"></div>
<div style="position:absolute;left:102px;top:743.5px;width:182px;height:16.5px;background:#585858;"></div>
<div style="position:absolute;left:758px;top:743.5px;width:16.5px;height:16.5px;background:#535353;"></div>
<span style="position:absolute;left:51px;top:744.3px;font-size:13px;line-height:15px;color:#f0f0f0;white-space:nowrap;transform:scaleX(0.9299);transform-origin:0 50%;">16.42%</span>
<span style="position:absolute;left:117px;top:743.8px;font-size:11px;line-height:14px;color:#e0e0e0;white-space:nowrap;transform:scaleX(1.0014);transform-origin:0 50%;">4032 Px x 2688 Px (300 ppi)</span>
<svg style="left:275.5px;top:747px;" width="5" height="9" viewBox="0 0 5 9"><path d="M0.700 0.500 4.300 4.500 0.700 8.500" fill="none" stroke="#d8d8d8" stroke-width="1.100"/></svg>
<div style="position:absolute;left:424px;top:746px;width:174.5px;height:10px;background:#6b6b6b;border-radius:5px"></div>
<div style="position:absolute;left:774.5px;top:82px;width:2.5px;height:678px;background:#383838;"></div>
<svg style="left:78px;top:215px" width="662" height="442" viewBox="78 215 662 442">
<path d="M410.8 317.2C408.0 317.3 399.1 317.6 394.0 318.0C388.9 318.4 384.3 318.7 380.0 319.3C375.7 319.9 373.2 320.1 368.0 321.7C362.8 323.3 354.9 325.8 349.0 328.8C343.1 331.8 337.7 334.6 332.6 339.5C327.5 344.4 322.5 351.3 318.4 358.4C314.3 365.5 310.4 374.1 307.8 382.0C305.2 389.9 303.6 398.6 303.0 405.8C302.4 413.0 303.0 418.8 304.0 425.0C305.0 431.2 305.4 436.6 309.0 443.0C312.6 449.4 319.5 458.3 325.5 463.5C331.5 468.7 336.8 470.9 345.0 474.0C353.2 477.1 364.4 480.2 375.0 482.0C385.6 483.8 397.7 484.7 408.5 484.5C419.3 484.3 429.2 483.9 440.0 481.0C450.8 478.1 464.7 473.2 473.5 467.0C482.3 460.8 488.5 451.8 493.0 444.0C497.5 436.2 499.6 427.2 500.5 420.0C501.4 412.8 499.9 408.1 498.4 401.0C496.9 393.9 494.5 384.8 491.3 377.3C488.1 369.8 484.5 363.1 479.4 356.0C474.3 348.9 467.6 341.4 460.5 334.7C453.4 328.0 444.7 320.9 436.8 315.8C428.9 310.7 420.2 306.5 413.1 303.9C406.0 301.3 400.1 300.6 394.2 300.4C388.3 300.2 382.6 300.8 377.6 302.8C372.6 304.8 366.4 310.6 364.1 312.2C366.8 312.5 375.0 313.7 380.0 314.1C385.0 314.5 389.1 314.1 394.2 314.6C399.3 315.1 408.0 316.8 410.8 317.2Z" fill="#f2bc7a"/>
<path d="M477.5 255.0L477.4 255.3L477.3 255.7L477.3 256.2L477.2 256.9L477.1 258.0L477.0 259.6L476.9 261.9L476.8 264.8L476.7 268.1L476.6 271.6L476.4 274.9L476.3 278.0L476.3 280.7L476.2 283.3L476.1 285.8L476.0 288.3L476.0 290.8L475.9 293.3L476.0 295.8L476.1 298.3L476.2 300.7L476.3 303.2L476.4 305.8L476.5 308.6L476.6 311.6L476.8 315.0L476.9 318.4L477.1 321.7L477.2 324.6L477.4 326.9L477.5 328.5L477.6 329.6L477.6 330.4L477.7 330.8L477.8 331.2L477.9 331.5L480.9 331.5L481.0 331.2L481.1 330.8L481.1 330.3L481.2 329.6L481.3 328.5L481.4 326.9L481.5 324.6L481.6 321.7L481.7 318.4L481.8 314.9L482.0 311.6L482.1 308.5L482.1 305.8L482.2 303.2L482.3 300.7L482.4 298.2L482.4 295.7L482.5 293.2L482.4 290.7L482.3 288.2L482.2 285.8L482.1 283.3L482.0 280.7L481.9 277.9L481.8 274.9L481.6 271.5L481.5 268.1L481.3 264.8L481.2 261.9L481.0 259.6L480.9 258.0L480.8 256.9L480.8 256.1L480.7 255.7L480.6 255.3L480.5 255.0ZM441.2 284.9L441.6 285.0L442.1 285.1L442.6 285.1L443.5 285.2L444.9 285.3L446.8 285.3L449.6 285.4L453.2 285.5L457.2 285.7L461.4 285.8L465.5 285.9L469.2 286.0L472.5 286.0L475.7 286.1L478.7 286.2L481.7 286.3L484.8 286.3L487.8 286.4L490.9 286.2L493.9 286.0L496.9 285.9L499.9 285.7L503.1 285.5L506.4 285.3L510.1 285.1L514.2 284.8L518.4 284.6L522.4 284.4L526.0 284.1L528.7 283.9L530.7 283.8L532.1 283.7L532.9 283.6L533.5 283.5L533.9 283.4L534.3 283.3L534.3 280.5L533.9 280.4L533.4 280.3L532.9 280.3L532.0 280.2L530.6 280.1L528.7 280.1L525.9 280.0L522.3 279.9L518.3 279.7L514.1 279.6L510.0 279.5L506.3 279.4L503.0 279.4L499.8 279.3L496.8 279.2L493.8 279.1L490.7 279.1L487.7 279.0L484.6 279.2L481.6 279.4L478.6 279.5L475.6 279.7L472.4 279.9L469.1 280.1L465.4 280.3L461.3 280.6L457.1 280.8L453.1 281.0L449.5 281.3L446.8 281.5L444.8 281.6L443.4 281.7L442.6 281.8L442.0 281.9L441.6 282.0L441.2 282.1ZM457.9 262.4L458.0 262.7L458.1 262.9L458.3 263.3L458.6 263.8L459.1 264.5L459.9 265.6L461.0 267.1L462.4 269.0L464.0 271.1L465.7 273.3L467.3 275.5L468.8 277.5L470.2 279.2L471.5 280.9L472.7 282.5L474.0 284.0L475.2 285.6L476.4 287.2L477.8 288.8L479.1 290.3L480.4 291.8L481.7 293.3L483.1 294.9L484.5 296.6L486.1 298.5L487.9 300.5L489.8 302.6L491.6 304.6L493.1 306.4L494.4 307.7L495.3 308.7L495.9 309.3L496.3 309.7L496.6 310.0L496.9 310.1L497.1 310.3L499.3 308.5L499.2 308.2L499.1 308.0L498.9 307.6L498.6 307.1L498.1 306.4L497.3 305.3L496.2 303.8L494.8 301.9L493.2 299.8L491.5 297.6L489.9 295.4L488.4 293.4L487.0 291.7L485.7 290.0L484.5 288.4L483.2 286.9L482.0 285.3L480.8 283.7L479.4 282.1L478.1 280.6L476.8 279.1L475.5 277.6L474.1 276.0L472.7 274.3L471.1 272.4L469.3 270.4L467.4 268.3L465.6 266.3L464.1 264.5L462.8 263.2L461.9 262.2L461.3 261.6L460.9 261.2L460.6 260.9L460.3 260.8L460.1 260.6ZM496.4 263.2L496.2 263.3L496.0 263.4L495.7 263.6L495.3 264.0L494.7 264.5L493.8 265.4L492.6 266.6L491.1 268.1L489.5 269.8L487.7 271.7L486.0 273.4L484.4 275.0L483.1 276.5L481.8 277.9L480.5 279.2L479.3 280.6L478.0 281.9L476.8 283.2L475.6 284.7L474.4 286.0L473.2 287.4L472.0 288.8L470.8 290.3L469.5 291.8L468.1 293.6L466.5 295.5L464.9 297.4L463.4 299.3L462.1 301.0L461.0 302.3L460.3 303.3L459.8 303.9L459.5 304.4L459.3 304.7L459.2 304.9L459.1 305.2L461.3 307.0L461.5 306.9L461.7 306.8L462.0 306.6L462.4 306.2L463.0 305.7L463.9 304.8L465.1 303.6L466.6 302.1L468.2 300.4L470.0 298.5L471.7 296.8L473.3 295.2L474.6 293.7L475.9 292.3L477.2 291.0L478.4 289.6L479.7 288.3L480.9 287.0L482.1 285.5L483.3 284.2L484.5 282.8L485.7 281.4L486.9 279.9L488.2 278.4L489.6 276.6L491.2 274.7L492.8 272.8L494.3 270.9L495.6 269.2L496.7 267.9L497.4 266.9L497.9 266.3L498.2 265.8L498.4 265.5L498.5 265.3L498.6 265.0Z" fill="#b8dada"/>
<path d="M485.6 355.6L485.9 355.6L486.3 355.6L486.7 355.6L487.2 355.6L487.7 355.6L488.2 355.5L488.8 355.5L489.3 355.5L489.9 355.5L490.5 355.4L491.1 355.4L491.7 355.3L492.3 355.3L493.0 355.2L493.6 355.2L494.3 355.1L495.0 355.1L495.7 355.0L496.5 355.0L497.4 355.0L498.3 354.9L499.4 354.9L500.5 354.8L501.6 354.8L502.8 354.7L503.9 354.7L505.1 354.7L506.2 354.7L507.3 354.7L508.4 354.8L509.4 354.8L510.5 354.9L511.6 354.9L512.6 355.0L513.7 355.1L514.7 355.2L515.8 355.4L516.7 355.5L517.7 355.7L518.5 355.9L519.4 356.2L520.3 356.5L521.2 356.8L522.1 357.1L522.9 357.5L523.7 357.8L524.4 358.2L525.0 358.5L525.5 358.9L525.9 359.2L526.2 359.5L526.5 359.8L526.7 360.1L526.9 360.3L526.9 360.5L527.0 360.6L527.0 360.7L527.0 360.8L527.0 360.9L526.9 361.1L526.8 361.4L526.5 361.8L526.3 362.2L525.9 362.7L525.4 363.3L524.9 363.9L524.3 364.5L523.6 365.1L522.9 365.8L522.0 366.5L521.1 367.2L520.0 368.0L518.8 368.8L517.5 369.6L516.2 370.5L514.7 371.4L513.2 372.3L511.6 373.2L510.0 374.1L508.4 375.1L506.8 376.0L505.2 377.0L503.6 378.0L502.0 379.0L500.3 380.0L498.6 381.0L496.8 382.0L495.0 382.9L493.1 383.9L491.2 384.9L489.2 385.9L487.0 387.0L484.8 388.0L482.5 389.1L480.1 390.1L477.7 391.2L475.2 392.3L472.7 393.3L470.3 394.4L467.8 395.5L465.4 396.5L462.9 397.6L460.4 398.7L457.9 399.7L455.4 400.8L452.9 401.9L450.4 402.9L448.0 403.9L445.5 404.9L443.0 405.9L440.6 406.8L438.1 407.7L435.7 408.6L433.2 409.4L430.7 410.3L428.3 411.1L425.8 412.0L423.2 412.9L420.7 413.7L418.2 414.6L415.7 415.5L413.2 416.4L410.8 417.2L408.4 418.1L406.0 419.0L403.5 419.9L401.0 420.8L398.4 421.7L395.6 422.6L392.8 423.6L389.7 424.6L386.4 425.7L383.0 426.8L379.5 427.9L376.0 429.0L372.3 430.2L368.7 431.3L365.2 432.4L361.7 433.5L358.4 434.6L355.1 435.6L351.9 436.6L348.7 437.6L345.6 438.6L342.5 439.6L339.4 440.6L336.3 441.5L333.3 442.5L330.2 443.4L327.1 444.3L324.1 445.3L320.9 446.3L317.8 447.3L314.7 448.2L311.6 449.2L308.5 450.1L305.5 451.0L302.7 451.9L299.9 452.6L297.3 453.3L294.8 454.0L292.3 454.7L289.8 455.3L287.5 455.9L285.3 456.4L283.1 456.9L281.1 457.4L279.2 457.7L277.5 458.0L275.9 458.3L274.6 458.4L273.4 458.5L272.3 458.5L271.4 458.5L270.7 458.5L270.0 458.4L269.4 458.2L268.9 458.1L268.3 457.9L267.8 457.7L267.5 457.5L267.2 457.3L266.9 457.1L266.7 456.9L266.5 456.6L266.3 456.3L266.1 455.9L266.0 455.5L265.9 455.1L265.8 454.7L265.8 454.3L265.8 453.9L265.9 453.4L266.0 452.9L266.1 452.4L266.3 451.8L266.6 451.2L267.0 450.5L267.4 449.7L267.9 449.0L268.5 448.1L269.2 447.2L270.0 446.2L270.9 445.1L271.9 444.0L272.9 442.9L274.0 441.8L275.1 440.6L276.2 439.4L277.3 438.3L278.5 437.1L279.7 435.8L281.1 434.5L282.5 433.1L283.8 431.7L285.2 430.5L286.4 429.2L287.5 428.2L288.4 427.2L289.2 426.5L284.8 422.1L284.1 422.8L283.2 423.6L282.0 424.7L280.8 425.9L279.4 427.2L278.0 428.5L276.6 429.9L275.2 431.2L273.9 432.5L272.7 433.7L271.5 434.9L270.4 436.0L269.2 437.1L268.1 438.3L267.0 439.4L265.9 440.6L264.8 441.7L263.8 442.8L262.9 443.9L262.1 445.0L261.4 446.1L260.8 447.2L260.3 448.2L259.8 449.2L259.5 450.2L259.2 451.2L259.0 452.2L258.8 453.3L258.8 454.3L258.8 455.3L258.9 456.3L259.1 457.3L259.4 458.3L259.7 459.3L260.2 460.2L260.8 461.2L261.5 462.1L262.3 462.9L263.2 463.6L264.2 464.3L265.1 464.8L266.0 465.3L267.0 465.7L268.1 466.0L269.3 466.3L270.6 466.6L271.9 466.7L273.4 466.8L275.0 466.8L276.7 466.7L278.5 466.6L280.5 466.4L282.6 466.2L284.8 465.9L287.1 465.5L289.4 465.1L291.9 464.7L294.5 464.2L297.1 463.6L299.7 463.1L302.5 462.4L305.3 461.7L308.3 460.9L311.4 460.0L314.5 459.2L317.6 458.3L320.8 457.4L324.0 456.5L327.1 455.6L330.3 454.7L333.3 453.8L336.4 452.8L339.5 451.9L342.6 451.0L345.7 450.0L348.8 449.0L352.0 448.1L355.2 447.1L358.4 446.1L361.6 445.0L365.0 444.0L368.5 442.9L372.0 441.8L375.7 440.6L379.3 439.5L382.9 438.4L386.4 437.2L389.8 436.1L393.1 435.1L396.2 434.0L399.2 433.0L402.0 432.1L404.7 431.1L407.2 430.2L409.7 429.3L412.1 428.5L414.5 427.6L416.9 426.7L419.4 425.9L421.8 425.0L424.3 424.1L426.8 423.3L429.3 422.4L431.8 421.6L434.3 420.7L436.8 419.8L439.4 418.9L441.9 418.0L444.4 417.1L447.0 416.1L449.5 415.1L452.1 414.1L454.6 413.1L457.2 412.0L459.7 410.9L462.3 409.9L464.8 408.8L467.3 407.7L469.7 406.6L472.2 405.5L474.6 404.5L477.1 403.4L479.6 402.3L482.1 401.3L484.5 400.2L487.0 399.1L489.4 398.0L491.7 396.9L494.0 395.8L496.2 394.7L498.3 393.6L500.3 392.4L502.2 391.3L504.1 390.2L505.8 389.1L507.6 388.0L509.2 386.9L510.8 385.8L512.4 384.8L514.0 383.7L515.5 382.7L517.0 381.7L518.5 380.6L520.0 379.6L521.5 378.5L522.9 377.5L524.3 376.4L525.6 375.4L526.9 374.3L528.0 373.3L529.0 372.2L529.9 371.2L530.8 370.2L531.6 369.2L532.3 368.2L532.9 367.1L533.4 366.1L533.9 365.1L534.2 364.0L534.5 362.9L534.7 361.7L534.7 360.6L534.6 359.4L534.3 358.3L533.9 357.3L533.4 356.4L532.8 355.5L532.1 354.8L531.5 354.1L530.7 353.4L529.9 352.8L529.0 352.2L528.0 351.6L527.0 351.1L526.0 350.6L524.9 350.1L523.8 349.7L522.7 349.3L521.6 349.0L520.5 348.7L519.3 348.4L518.1 348.1L516.9 347.9L515.7 347.7L514.5 347.6L513.3 347.5L512.1 347.4L510.9 347.3L509.7 347.2L508.4 347.2L507.2 347.3L505.9 347.4L504.6 347.5L503.4 347.7L502.1 347.9L500.9 348.0L499.7 348.2L498.6 348.4L497.6 348.6L496.6 348.8L495.7 349.0L494.8 349.2L494.0 349.4L493.3 349.7L492.5 349.9L491.9 350.1L491.2 350.3L490.6 350.5L490.1 350.7L489.5 351.0L488.9 351.2L488.3 351.4L487.8 351.7L487.3 351.9L486.8 352.2L486.3 352.4L485.9 352.7L485.5 352.9L485.2 353.1L485.0 353.2ZM283.9 424.3a3.10 3.10 0 1 0 6.20 0a3.10 3.10 0 1 0 -6.20 0Z" fill="#4ab5ab"/>
<path d="M411 367C403 368.300 396 369.900 389.200 371.300C380 373.200 372 375.200 365.500 376.800C357 379 349 381.500 341.800 383.900C333 386.800 325 389.300 318.100 391.400C311 393.700 305 395.500 300.800 396.600C296 398 291 399.200 286.600 399.700L297.600 403.200C305 401.800 311 399.700 318.100 397.400C330 393.800 340 391 349.700 387.900C358 385.300 366 383 373.400 380.800C379 379 384 377.100 389.200 375.300C396 372.800 403 370.200 411 367Z" fill="#b8dada"/><path d="M296.3 383.6L296.0 383.8L295.7 384.0L295.2 384.2L294.7 384.5L294.1 384.8L293.5 385.2L292.8 385.6L292.2 386.0L291.5 386.4L290.8 386.8L290.2 387.2L289.6 387.7L288.9 388.2L288.2 388.7L287.6 389.2L286.9 389.7L286.2 390.2L285.5 390.8L284.9 391.3L284.3 391.9L283.8 392.4L283.2 393.0L282.7 393.5L282.2 394.1L281.7 394.7L281.2 395.3L280.8 395.9L280.4 396.5L280.1 397.1L279.8 397.9L279.6 398.6L279.5 399.4L279.5 400.2L279.6 400.9L279.9 401.6L280.2 402.3L280.6 402.8L281.1 403.3L281.5 403.7L282.1 404.1L282.7 404.4L283.4 404.6L284.0 404.8L284.6 404.9L285.2 405.0L285.8 405.0L286.4 405.0L287.0 405.0L287.6 404.9L288.2 404.9L288.9 404.8L289.5 404.7L290.2 404.6L290.9 404.4L291.6 404.3L292.2 404.1L292.9 403.9L293.5 403.7L294.1 403.6L294.7 403.4L295.2 403.2L295.9 403.0L296.5 402.8L297.1 402.6L297.6 402.4L298.2 402.2L298.7 402.0L299.1 401.8L299.4 401.7L299.7 401.5L298.3 397.3L298.0 397.3L297.6 397.4L297.1 397.6L296.7 397.7L296.1 397.9L295.6 398.0L295.0 398.2L294.4 398.3L293.9 398.5L293.3 398.6L292.8 398.7L292.2 398.9L291.6 399.0L291.0 399.2L290.4 399.3L289.8 399.4L289.2 399.5L288.7 399.6L288.2 399.7L287.8 399.7L287.3 399.7L286.9 399.7L286.4 399.7L286.0 399.7L285.7 399.7L285.4 399.6L285.1 399.6L285.0 399.5L284.9 399.5L284.9 399.5L284.9 399.5L284.9 399.5L284.9 399.5L284.9 399.5L285.0 399.5L285.0 399.6L285.0 399.6L285.0 399.7L285.0 399.7L285.0 399.7L285.1 399.6L285.2 399.4L285.4 399.1L285.7 398.7L286.1 398.3L286.5 397.9L286.9 397.5L287.3 397.0L287.8 396.6L288.3 396.1L288.8 395.7L289.3 395.3L289.8 394.8L290.4 394.4L291.1 393.9L291.7 393.5L292.3 393.0L293.0 392.6L293.6 392.2L294.2 391.8L294.7 391.5L295.3 391.1L295.8 390.8L296.4 390.5L297.0 390.2L297.5 389.9L298.1 389.6L298.5 389.4L299.0 389.2L299.3 389.0ZM294.7 386.3a3.10 3.10 0 1 0 6.20 0a3.10 3.10 0 1 0 -6.20 0Z" fill="#b8dada"/><path d="M297.6 404.7L298.3 404.6L299.2 404.4L300.2 404.3L301.4 404.1L302.7 403.9L304.0 403.7L305.5 403.4L307.1 403.1L308.7 402.8L310.3 402.4L312.0 402.0L313.8 401.5L315.8 401.0L317.8 400.5L319.9 399.9L322.0 399.3L324.1 398.7L326.2 398.1L328.3 397.5L330.4 396.9L332.4 396.3L334.4 395.7L336.4 395.0L338.5 394.3L340.5 393.7L342.5 393.0L344.5 392.4L346.5 391.7L348.5 391.1L350.4 390.4L352.3 389.8L354.2 389.2L356.1 388.5L358.0 387.9L359.8 387.3L361.7 386.7L363.4 386.1L365.1 385.5L366.8 385.0L368.3 384.4L369.8 383.9L371.2 383.4L372.5 383.0L373.8 382.5L375.0 382.1L376.1 381.6L377.2 381.2L378.3 380.8L379.3 380.4L380.2 380.1L381.2 379.7L382.0 379.3L382.9 378.9L383.7 378.6L384.4 378.3L385.1 378.0L385.7 377.7L386.2 377.4L386.7 377.2L387.1 377.0L386.9 376.6L386.5 376.7L386.0 376.8L385.4 377.0L384.8 377.2L384.1 377.4L383.3 377.7L382.5 377.9L381.6 378.2L380.7 378.5L379.8 378.7L378.8 379.1L377.8 379.4L376.7 379.7L375.6 380.1L374.4 380.4L373.2 380.8L371.9 381.2L370.6 381.7L369.2 382.1L367.7 382.6L366.1 383.0L364.5 383.6L362.8 384.1L361.0 384.6L359.2 385.2L357.3 385.8L355.4 386.4L353.5 387.0L351.5 387.6L349.6 388.2L347.7 388.8L345.8 389.4L343.8 390.0L341.8 390.7L339.7 391.4L337.7 392.0L335.7 392.7L333.7 393.3L331.6 393.9L329.6 394.5L327.6 395.1L325.5 395.7L323.4 396.3L321.3 396.9L319.2 397.5L317.1 398.1L315.1 398.6L313.2 399.1L311.4 399.6L309.7 400.0L308.1 400.4L306.6 400.8L305.0 401.1L303.6 401.4L302.2 401.7L301.0 401.9L299.8 402.2L298.8 402.4L297.9 402.6L297.2 402.7ZM296.4 403.7a1.00 1.00 0 1 0 2.00 0a1.00 1.00 0 1 0 -2.00 0Z" fill="#375558"/>
<path d="M454.100 452.500C461 450.200 468 447.300 475.300 444.200C482 441.300 488 438.200 493.700 435C500 431.300 506 427.200 512.100 423C516 420.500 520 417.800 523.200 415.700C526 413.800 529 412 532.400 410.100L536.500 413.500C532 416 527 419.500 523.200 422.100C517 426.300 511 429.800 504.700 433.200C498 436.800 491 440.300 484.500 443.300C479 445.800 473 448 467.900 449.700C463 451.200 458 452.200 454.100 452.500Z" fill="#b8dada"/><path d="M507.0 412.9L507.4 412.9L507.8 412.8L508.3 412.7L508.8 412.5L509.4 412.4L510.0 412.2L510.6 412.1L511.2 412.0L511.9 411.9L512.5 411.7L513.1 411.6L513.8 411.6L514.5 411.5L515.3 411.4L516.0 411.3L516.8 411.2L517.6 411.1L518.4 411.0L519.1 410.9L519.9 410.9L520.6 410.8L521.4 410.7L522.2 410.6L522.9 410.5L523.7 410.5L524.4 410.4L525.1 410.3L525.9 410.3L526.6 410.2L527.3 410.2L528.0 410.1L528.8 410.1L529.5 410.0L530.3 410.0L531.0 409.9L531.6 409.9L532.2 409.9L532.7 409.9L533.1 410.0L533.4 410.0L533.7 410.1L534.0 410.2L534.2 410.3L534.5 410.4L534.7 410.5L534.8 410.6L534.9 410.7L534.8 410.7L534.8 410.6L534.7 410.3L534.6 409.8L534.7 409.5L534.7 409.4L534.7 409.5L534.7 409.7L534.6 409.9L534.5 410.2L534.3 410.5L534.1 410.8L534.0 411.0L533.9 411.2L533.7 411.4L533.5 411.7L533.2 411.9L532.8 412.2L532.5 412.5L532.1 412.8L531.8 413.0L531.5 413.3L531.3 413.5L533.7 417.1L533.9 417.1L534.2 416.9L534.6 416.8L535.0 416.6L535.5 416.3L536.0 416.1L536.5 415.8L537.0 415.4L537.5 415.0L538.0 414.6L538.4 414.2L538.8 413.8L539.1 413.4L539.5 412.9L539.8 412.4L540.1 411.8L540.4 411.2L540.6 410.4L540.7 409.4L540.5 408.3L540.2 407.5L539.7 406.8L539.2 406.2L538.6 405.7L538.0 405.3L537.4 404.9L536.7 404.6L536.0 404.3L535.3 404.1L534.6 404.0L533.7 403.9L532.9 403.8L532.1 403.8L531.3 403.9L530.5 404.0L529.7 404.0L529.0 404.1L528.2 404.2L527.4 404.3L526.7 404.4L526.0 404.5L525.2 404.6L524.4 404.8L523.7 404.9L522.9 405.0L522.1 405.2L521.4 405.3L520.6 405.4L519.9 405.6L519.1 405.7L518.4 405.9L517.6 406.0L516.8 406.2L516.0 406.4L515.2 406.5L514.4 406.7L513.7 406.9L512.9 407.1L512.2 407.3L511.5 407.5L510.8 407.7L510.1 407.9L509.5 408.1L508.8 408.3L508.2 408.6L507.6 408.8L507.1 409.0L506.6 409.2L506.3 409.3L506.0 409.5ZM504.7 411.2a1.80 1.80 0 1 0 3.60 0a1.80 1.80 0 1 0 -3.60 0Z" fill="#b8dada"/><path d="M533.1 417.5L532.7 417.8L532.2 418.2L531.7 418.6L531.1 419.2L530.4 419.7L529.8 420.3L529.0 420.9L528.3 421.5L527.6 422.1L526.8 422.7L526.1 423.3L525.3 423.8L524.5 424.4L523.7 425.0L522.9 425.7L522.0 426.3L521.1 426.9L520.3 427.5L519.4 428.1L518.5 428.6L517.6 429.2L516.7 429.8L515.8 430.4L514.8 430.9L513.9 431.5L512.9 432.1L512.0 432.6L511.0 433.2L510.1 433.7L509.2 434.2L508.3 434.7L507.4 435.2L506.5 435.7L505.7 436.1L504.8 436.6L504.0 437.0L503.1 437.5L502.2 437.9L501.3 438.4L500.4 438.8L499.4 439.3L498.4 439.8L497.4 440.3L496.4 440.8L495.4 441.2L494.4 441.7L493.4 442.2L492.4 442.6L491.5 443.1L490.5 443.5L489.6 443.9L488.8 444.3L487.9 444.7L487.1 445.1L486.2 445.5L485.4 445.8L484.6 446.2L483.9 446.5L483.1 446.8L482.3 447.2L481.5 447.5L480.8 447.8L480.0 448.0L479.2 448.3L478.5 448.6L477.7 448.8L477.0 449.1L476.3 449.3L475.6 449.5L474.9 449.7L474.2 449.9L473.4 450.1L472.7 450.3L472.0 450.4L471.2 450.6L470.5 450.7L469.9 450.8L469.3 451.0L468.9 451.1L468.5 451.2L468.5 451.4L468.9 451.4L469.4 451.4L470.0 451.3L470.6 451.3L471.3 451.2L472.1 451.1L472.8 451.0L473.6 450.9L474.4 450.8L475.1 450.7L475.8 450.6L476.6 450.4L477.3 450.3L478.1 450.1L478.9 449.9L479.7 449.7L480.5 449.5L481.3 449.3L482.1 449.1L482.9 448.8L483.7 448.6L484.5 448.3L485.4 448.0L486.2 447.7L487.1 447.4L487.9 447.1L488.8 446.8L489.7 446.4L490.5 446.1L491.5 445.7L492.4 445.3L493.4 444.9L494.4 444.5L495.5 444.1L496.5 443.7L497.6 443.3L498.6 442.8L499.6 442.4L500.6 442.0L501.6 441.6L502.6 441.1L503.5 440.7L504.4 440.3L505.3 439.9L506.2 439.5L507.1 439.0L508.0 438.6L509.0 438.1L509.9 437.7L510.8 437.2L511.8 436.7L512.7 436.2L513.7 435.7L514.7 435.1L515.7 434.6L516.7 434.0L517.6 433.5L518.6 432.9L519.6 432.3L520.5 431.8L521.4 431.2L522.3 430.6L523.2 430.0L524.1 429.3L525.0 428.7L525.9 428.1L526.8 427.5L527.6 426.9L528.4 426.3L529.2 425.7L529.9 425.1L530.7 424.5L531.5 423.8L532.2 423.2L532.9 422.6L533.6 422.0L534.2 421.5L534.7 421.0L535.2 420.7L535.5 420.3Z" fill="#375558"/>
<rect x="299.500" y="503.200" width="15" height="43" rx="4" fill="#4ab5ab"/>
<g fill="#4ab5ab"><rect x="366" y="527" width="17" height="25"/><rect x="417" y="527" width="16" height="24"/><rect x="476" y="527" width="17" height="25"/></g>
<g fill="#fff"><ellipse cx="377.800" cy="537.500" rx="5.600" ry="10.500" transform="rotate(14 377.800 537.500)"/><ellipse cx="428.200" cy="537" rx="5.400" ry="10.300" transform="rotate(14 428.200 537)"/><ellipse cx="487.800" cy="537.500" rx="5.600" ry="10.500" transform="rotate(14 487.800 537.500)"/></g>
<g font-family="'Liberation Sans',sans-serif" font-size="72" stroke-linejoin="round" stroke-linecap="round" transform="scale(1.08 1)">
<text x="272.7 327.3 374.5 429.2" y="559.200" fill="#375558" stroke="#375558" stroke-width="7">Logo</text>
</g>
</svg>
<div style="position:absolute;left:777px;top:82px;width:317px;height:678px;background:#535353;"></div>
<div style="position:absolute;left:1094.5px;top:48px;width:2.5px;height:712px;background:#2e2e2e;"></div>
<div style="position:absolute;left:777px;top:82px;width:317px;height:11px;background:#404040;"></div>
<svg style="left:801px;top:85px;" width="8" height="5" viewBox="0 0 8 5"><path d="M3 0.300 0.500 2.500 3 4.700M7 0.300 4.500 2.500 7 4.700" fill="none" stroke="#cfcfcf" stroke-width="1"/></svg>
<svg style="left:1081px;top:85px;" width="8" height="5" viewBox="0 0 8 5"><path d="M0.500 0.300 3 2.500 0.500 4.700M4.500 0.300 7 2.500 4.500 4.700" fill="none" stroke="#cfcfcf" stroke-width="1"/></svg>
<div style="position:absolute;left:814px;top:82px;width:3px;height:678px;background:#383838;"></div>
<div style="position:absolute;left:777px;top:93px;width:37px;height:1px;background:#383838;"></div>
<div style="position:absolute;left:777px;top:162px;width:37px;height:1px;background:#383838;"></div>
<div style="position:absolute;left:777px;top:231px;width:37px;height:1px;background:#383838;"></div>
<div style="position:absolute;left:777px;top:300px;width:37px;height:1px;background:#383838;"></div>
<div style="position:absolute;left:777px;top:341px;width:37px;height:1px;background:#383838;"></div>
<div style="position:absolute;left:785.5px;top:98px;width:20.0px;height:3px;background:transparent;background:repeating-linear-gradient(90deg,#6a6a6a 0 1px,transparent 1px 2px)"></div>
<div style="position:absolute;left:785.5px;top:167px;width:20.0px;height:3px;background:transparent;background:repeating-linear-gradient(90deg,#6a6a6a 0 1px,transparent 1px 2px)"></div>
<div style="position:absolute;left:785.5px;top:236px;width:20.0px;height:3px;background:transparent;background:repeating-linear-gradient(90deg,#6a6a6a 0 1px,transparent 1px 2px)"></div>
<div style="position:absolute;left:785.5px;top:305px;width:20.0px;height:3px;background:transparent;background:repeating-linear-gradient(90deg,#6a6a6a 0 1px,transparent 1px 2px)"></div>
<svg style="left:789px;top:108.5px;" width="14.3" height="16.5" viewBox="0 0 17 20"><rect x="0.600" y="0.600" width="4.800" height="4.800" fill="none" stroke="#d8d8d8" stroke-width="1.200"/><rect x="0.600" y="7.300" width="4.800" height="4.800" fill="none" stroke="#d8d8d8" stroke-width="1.200"/><rect x="0" y="13.800" width="6" height="6" fill="#d8d8d8"/><path d="M11.500 4.200c3.800 1.200 5 4.500 3.800 7.800-0.700 2-2.200 3.500-4.500 4.500" fill="none" stroke="#d8d8d8" stroke-width="1.700"/><path fill="#d8d8d8" d="M8.300 5.500 13.500 1.200 14 7.500z"/></svg>
<svg style="left:789px;top:138.2px;" width="14" height="12.4" viewBox="0 0 18 16"><path fill="#d8d8d8" d="M1.500 0h15c0.800 0 1.500 0.700 1.500 1.500v9c0 0.800-0.700 1.500-1.500 1.500H9l-4.500 4v-4h-3C0.700 12 0 11.300 0 10.500v-9C0 0.700 0.700 0 1.500 0z"/></svg>
<svg style="left:0;top:0" width="1098" height="400" viewBox="0 0 1098 400"><path fill="#d8d8d8" d="M804.800 179.400c0.600 0.500 0.400 1.300-0.100 2l-5.600 7.400-2.300-1.900 6.600-6.900c0.500-0.500 0.900-0.600 1.400-0.600zM796.100 187.500l2.500 2.100c0.600 2.700-2.700 4.800-9.800 4.300 1.600-0.700 1.900-2 2.400-3.300 0.800-2 2.700-3.100 4.900-3.100z"/><rect x="784.800" y="177.8" width="1.600" height="1.300" fill="#d8d8d8"/><rect x="787.300" y="177.8" width="4.400" height="1.300" fill="#d8d8d8"/><rect x="784.800" y="180.6" width="1.600" height="1.300" fill="#d8d8d8"/><rect x="787.300" y="180.6" width="4.400" height="1.300" fill="#d8d8d8"/><rect x="784.800" y="183.4" width="1.600" height="1.300" fill="#d8d8d8"/><rect x="787.300" y="183.4" width="4.400" height="1.300" fill="#d8d8d8"/><path fill="#d8d8d8" d="M785.300 207.200c2.500-1.200 6-1.500 9.200 0.800v1.600c-3.200 2.300-6.700 2-9.200 0.800 1-0.500 1.500-1 1.500-1.600s-0.500-1.100-1.500-1.600z"/><rect x="795.300" y="207.900" width="9.500" height="1.900" fill="#d8d8d8"/><rect x="787" y="216.200" width="10.500" height="1.900" fill="#d8d8d8"/><path fill="#d8d8d8" d="M797.500 217.100 803.300 212.500c1.800 1.200 2.600 2.900 2.600 4.600s-0.800 3.400-2.600 4.600z"/></svg>
<span style="position:absolute;left:788.5px;top:244.3px;font-size:18.5px;line-height:20px;color:#d8d8d8;white-space:nowrap;transform:scaleX(0.9725);transform-origin:0 50%;">A</span>
<div style="position:absolute;left:802.3px;top:246.5px;width:1.2px;height:16.5px;background:#d8d8d8;"></div>
<svg style="left:790px;top:274.5px;" width="11.5" height="15" viewBox="0 0 13 18"><path fill="#d8d8d8" d="M5.600 0H13v1.800h-1.600V18H9.600V1.800H7.800V18H6V10.600H5.600a5.300 5.300 0 0 1 0-10.600z"/></svg>
<svg style="left:788px;top:314.5px;" width="15.5" height="17.5" viewBox="0 0 18 19"><path d="M1 4.800 9 8.800V18.200L1 14.200z" fill="#8a8a8a"/><path d="M9 0.800 17 4.800v9.400L9 18.200 1 14.200V4.800z" fill="none" stroke="#d8d8d8" stroke-width="1.300" stroke-linejoin="round"/><path d="M1 4.800 9 8.800 17 4.800M9 8.800V18.200" fill="none" stroke="#d8d8d8" stroke-width="1.300"/></svg>
<div style="position:absolute;left:817px;top:93px;width:277px;height:28px;background:#424242;"></div>
<div class="clip" style="left:826px;top:98px;width:27.5px;height:18px"><span style="position:absolute;left:0px;top:1.9px;font-size:11.5px;line-height:15px;color:#bdbdbd;white-space:nowrap;font-weight:bold;transform:scaleX(0.9200);transform-origin:0 50%;">Farbe</span></div>
<div style="position:absolute;left:853.5px;top:93px;width:1.0px;height:28px;background:#383838;"></div>
<div class="clip" style="left:862px;top:98px;width:26.5px;height:18px"><span style="position:absolute;left:0px;top:1.9px;font-size:11.5px;line-height:15px;color:#bdbdbd;white-space:nowrap;font-weight:bold;transform:scaleX(0.9200);transform-origin:0 50%;">Farbfelder</span></div>
<div style="position:absolute;left:889.0px;top:93px;width:1.0px;height:28px;background:#383838;"></div>
<div class="clip" style="left:898px;top:98px;width:24.9px;height:18px"><span style="position:absolute;left:0px;top:1.9px;font-size:11.5px;line-height:15px;color:#bdbdbd;white-space:nowrap;font-weight:bold;transform:scaleX(0.9200);transform-origin:0 50%;">Verläufe</span></div>
<div style="position:absolute;left:924.5px;top:93px;width:1.0px;height:28px;background:#383838;"></div>
<div class="clip" style="left:934px;top:98px;width:26.7px;height:18px"><span style="position:absolute;left:0px;top:1.9px;font-size:11.5px;line-height:15px;color:#bdbdbd;white-space:nowrap;font-weight:bold;transform:scaleX(0.9200);transform-origin:0 50%;">Muster</span></div>
<div style="position:absolute;left:961.0px;top:93px;width:1.0px;height:28px;background:#383838;"></div>
<div class="clip" style="left:970px;top:98px;width:26.7px;height:18px"><span style="position:absolute;left:0px;top:1.9px;font-size:11.5px;line-height:15px;color:#bdbdbd;white-space:nowrap;font-weight:bold;transform:scaleX(0.9200);transform-origin:0 50%;">Bibliotheken</span></div>
<div style="position:absolute;left:997.0px;top:93px;width:1.0px;height:28px;background:#383838;"></div>
<div style="position:absolute;left:998px;top:93px;width:54px;height:28.5px;background:#535353;"></div>
<div style="position:absolute;left:1052px;top:93px;width:1px;height:28px;background:#383838;"></div>
<span style="position:absolute;left:1006.5px;top:99.9px;font-size:11.5px;line-height:15px;color:#f2f2f2;white-space:nowrap;font-weight:bold;transform:scaleX(0.8788);transform-origin:0 50%;">Ebenen</span>
<svg style="left:1079px;top:104px;" width="10" height="7" viewBox="0 0 10 7"><path d="M0 0.500h10M0 2.500h10M0 4.500h10M0 6.500h10" stroke="#d0d0d0" stroke-width="1"/></svg>
<div style="position:absolute;left:817px;top:121px;width:181px;height:1px;background:#3c3c3c;"></div>
<div style="position:absolute;left:1053px;top:121px;width:41px;height:1px;background:#3c3c3c;"></div>
<div class="inp" style="position:absolute;left:820px;top:131px;width:92.5px;height:17.5px;background:#454545;border-radius:3px"></div>
<svg style="left:826.5px;top:134.5px;" width="12" height="12" viewBox="0 0 12 12"><circle cx="4.500" cy="4.500" r="3.400" fill="none" stroke="#e6e6e6" stroke-width="1.600"/><path d="M7 7 10.500 10.500" stroke="#e6e6e6" stroke-width="1.900" stroke-linecap="round"/></svg>
<span style="position:absolute;left:841.5px;top:133.1px;font-size:12px;line-height:15px;color:#f0f0f0;white-space:nowrap;transform:scaleX(0.9782);transform-origin:0 50%;">Art</span>
<svg style="left:901px;top:138px;" width="7" height="5" viewBox="0 0 7 5"><path d="M0.500 0.700 3.500 3.700 6.500 0.700" fill="none" stroke="#e0e0e0" stroke-width="1.200"/></svg>
<svg style="left:943.5px;top:135px;" width="12" height="10" viewBox="0 0 12 10"><rect x="0.600" y="0.600" width="10.800" height="8.800" fill="none" stroke="#d8d8d8" stroke-width="1.200"/><path fill="#d8d8d8" d="M2 8 4.800 4.500 6.500 6.500 8 5 10 8z"/></svg>
<svg style="left:968px;top:134.5px;" width="11" height="11" viewBox="0 0 11 11"><circle cx="5.500" cy="5.500" r="4.900" fill="none" stroke="#d8d8d8" stroke-width="1.200"/><path fill="#d8d8d8" d="M9 2A4.900 4.900 0 0 1 2 9z"/></svg>
<span style="position:absolute;left:993px;top:133.6px;font-size:13.5px;line-height:15px;color:#d8d8d8;white-space:nowrap;font-weight:bold;transform:scaleX(1.2127);transform-origin:0 50%;font-family:'Liberation Serif',serif;">T</span>
<svg style="left:1016px;top:134.5px;" width="11.5" height="11.5" viewBox="0 0 11.5 11.5"><rect x="1.750" y="1.750" width="8" height="8" fill="none" stroke="#d8d8d8" stroke-width="1.200"/><g fill="#d8d8d8"><rect x="0" y="0" width="3.200" height="3.200"/><rect x="8.300" y="0" width="3.200" height="3.200"/><rect x="0" y="8.300" width="3.200" height="3.200"/><rect x="8.300" y="8.300" width="3.200" height="3.200"/></g></svg>
<svg style="left:1040px;top:134px;" width="11.5" height="12.5" viewBox="0 0 11.5 12.5"><path d="M3.200 4V0.600h5L10.900 3.300V11.900H6" fill="none" stroke="#d8d8d8" stroke-width="1.200"/><path d="M8.200 0.600V3.300H10.900" fill="none" stroke="#d8d8d8" stroke-width="1"/><rect x="0" y="6" width="5.500" height="6.500" fill="#d8d8d8"/></svg>
<div style="position:absolute;left:1081px;top:131px;width:8px;height:18.5px;background:#3e3e3e;border-radius:4px;border:1px solid #6a6a6a"></div>
<div style="position:absolute;left:1081.5px;top:131.5px;width:7.0px;height:7.0px;background:#e0e0e0;border-radius:50%"></div>
<div style="position:absolute;left:817px;top:152.5px;width:277px;height:1.0px;background:#434343;"></div>
<div style="position:absolute;left:820.5px;top:159.5px;width:157.5px;height:16.5px;background:#4f4f4f;border:1px solid #606060;border-radius:3px"></div>
<span style="position:absolute;left:828.5px;top:160.6px;font-size:11.5px;line-height:15px;color:#8a8a8a;white-space:nowrap;transform:scaleX(0.8904);transform-origin:0 50%;">Normal</span>
<svg style="left:967.5px;top:166px;" width="7" height="5" viewBox="0 0 7 5"><path d="M0.500 0.700 3.500 3.700 6.500 0.700" fill="none" stroke="#7c7c7c" stroke-width="1.100"/></svg>
<span style="position:absolute;left:982.5px;top:159.8px;font-size:11px;line-height:14px;color:#8e8e8e;white-space:nowrap;transform:scaleX(0.9998);transform-origin:0 50%;">Deckkraft:</span>
<div style="position:absolute;left:1034px;top:159.5px;width:54.5px;height:16.5px;background:#4f4f4f;border:1px solid #626262;border-radius:3px"></div>
<div style="position:absolute;left:1074px;top:159.5px;width:1px;height:16.5px;background:#626262;"></div>
<span style="position:absolute;left:1038.5px;top:161.3px;font-size:11px;line-height:14px;color:#777;white-space:nowrap;transform:scaleX(0.9952);transform-origin:0 50%;">100%</span>
<svg style="left:1078.5px;top:166px;" width="7" height="5" viewBox="0 0 7 5"><path d="M0.500 0.700 3.500 3.700 6.500 0.700" fill="none" stroke="#7c7c7c" stroke-width="1.100"/></svg>
<div style="position:absolute;left:817px;top:180.5px;width:277px;height:1.0px;background:#434343;"></div>
<span style="position:absolute;left:822px;top:187.6px;font-size:11px;line-height:14px;color:#8e8e8e;white-space:nowrap;transform:scaleX(0.9602);transform-origin:0 50%;">Fixieren:</span>
<svg style="left:869px;top:190px;" width="11.5" height="11.5" viewBox="0 0 11.5 11.5"><rect x="0.500" y="0.500" width="10.500" height="10.500" fill="none" stroke="#9d9d9d" stroke-width="1"/><g fill="#9d9d9d"><rect x="1" y="1" width="3.200" height="3.200"/><rect x="7.300" y="1" width="3.200" height="3.200"/><rect x="4.200" y="4.200" width="3.200" height="3.200"/><rect x="1" y="7.300" width="3.200" height="3.200"/><rect x="7.300" y="7.300" width="3.200" height="3.200"/></g></svg>
<svg style="left:890px;top:189px;" width="13.5" height="13.5" viewBox="0 0 13.5 13.5"><path fill="#9d9d9d" d="M13 0.300c0.500 0.500 0.300 1.200-0.200 1.900L8.300 8.600 6.400 6.900 12 0.900c0.400-0.400 0.700-0.400 1-0.600zM5.600 7.700l1.900 1.800c-0.300 1.800-2.200 3.200-5.400 3 1.800-1.100 1.800-3.800 3.500-4.800z"/></svg>
<svg style="left:912px;top:189.5px;" width="12.5" height="12.5" viewBox="0 0 12.5 12.5"><path d="M6.250 1.500V11M1.500 6.250H11" stroke="#9d9d9d" stroke-width="1.200"/><path fill="#9d9d9d" d="M6.250 0 8.400 2.700H4.100zM6.250 12.500 8.400 9.800H4.100zM0 6.250 2.700 4.100V8.400zM12.500 6.250 9.800 4.100V8.400z"/></svg>
<svg style="left:934px;top:189px;" width="14.5" height="14" viewBox="0 0 14.5 14"><path d="M3 0V11H14.500M0 3H11V14" fill="none" stroke="#9d9d9d" stroke-width="1.100" stroke-dasharray="2.200 1.200"/><rect x="3" y="3" width="8" height="8" fill="none" stroke="#9d9d9d" stroke-width="1.200"/></svg>
<svg style="left:957.5px;top:189px;" width="11" height="12.5" viewBox="0 0 11 12.5"><path d="M2.700 6V3.800a2.800 2.800 0 0 1 5.600 0V6" fill="none" stroke="#9d9d9d" stroke-width="1.500"/><rect x="0" y="5.500" width="11" height="7" rx="1" fill="#9d9d9d"/><rect x="4.700" y="7.800" width="1.600" height="2.400" fill="#535353"/></svg>
<span style="position:absolute;left:998px;top:187.6px;font-size:11px;line-height:14px;color:#8e8e8e;white-space:nowrap;transform:scaleX(0.9564);transform-origin:0 50%;">Fläche:</span>
<div style="position:absolute;left:1034px;top:187.5px;width:54.5px;height:16.5px;background:#4f4f4f;border:1px solid #626262;border-radius:3px"></div>
<div style="position:absolute;left:1074px;top:187.5px;width:1px;height:16.5px;background:#626262;"></div>
<span style="position:absolute;left:1038.5px;top:189.3px;font-size:11px;line-height:14px;color:#777;white-space:nowrap;transform:scaleX(0.9952);transform-origin:0 50%;">100%</span>
<svg style="left:1078.5px;top:194px;" width="7" height="5" viewBox="0 0 7 5"><path d="M0.500 0.700 3.500 3.700 6.500 0.700" fill="none" stroke="#7c7c7c" stroke-width="1.100"/></svg>
<div style="position:absolute;left:817px;top:211.5px;width:262px;height:127.0px;background:#4d4d4d;"></div>
<div style="position:absolute;left:1079px;top:211.5px;width:15px;height:127.0px;background:#4c4c4c;"></div>
<div style="position:absolute;left:817px;top:211.5px;width:262px;height:32.0px;background:#5a5a5a;"></div>
<div style="position:absolute;left:847px;top:211.5px;width:1px;height:32.0px;background:#484848;"></div>
<svg style="left:825.5px;top:223.5px;" width="14" height="9.5" viewBox="0 0 14 9.5"><path fill="#e8e8e8" d="M7 0c3 0 5.500 1.900 7 4.750C12.500 7.600 10 9.500 7 9.500S1.500 7.600 0 4.750C1.500 1.900 4 0 7 0z"/><circle cx="7" cy="4.750" r="2.900" fill="#5a5a5a"/><circle cx="7" cy="4.750" r="1.500" fill="#e8e8e8"/></svg>
<div style="position:absolute;left:850.5px;top:215.8px;width:33.9px;height:23.9px;background:#ffffff;border:1px solid #1c1c1c"></div>
<div style="position:absolute;left:862px;top:222.3px;width:6.2px;height:6.5px;background:#f3bd7a;border-radius:50%"></div>
<div style="position:absolute;left:868.3px;top:220.2px;width:1.2px;height:2.0px;background:#b7dada;"></div>
<div style="position:absolute;left:860.8px;top:226px;width:8.2px;height:1.1px;background:#49b5aa;transform:rotate(-22deg)"></div>
<div style="position:absolute;left:862px;top:231.3px;width:5.4px;height:2.0px;background:#3a5559;border-radius:1px"></div>
<div style="position:absolute;left:868.8px;top:223.5px;width:14.6px;height:15.2px;background:#4a4a4a;"></div>
<svg style="left:870px;top:225.5px;" width="11" height="12" viewBox="0 0 11 12"><path d="M3 5V0.500H7.500L10.500 3.500V11H6" fill="none" stroke="#e4e4e4" stroke-width="1"/><path d="M7.500 0.500V3.500H10.500" fill="none" stroke="#e4e4e4" stroke-width="0.800"/><rect x="0" y="7" width="4.800" height="4.800" fill="#e4e4e4"/></svg>
<span style="position:absolute;left:891px;top:219.6px;font-size:11px;line-height:14px;color:#f0f0f0;white-space:nowrap;transform:scaleX(1.0007);transform-origin:0 50%;">pixellogo-bespiel</span>
<div style="position:absolute;left:817px;top:338.5px;width:277px;height:1.0px;background:#454545;"></div>
<svg style="left:892px;top:346px;" width="14" height="8.5" viewBox="0 0 14 8.5"><path d="M5.800 1H3.600a3.200 3.200 0 0 0 0 6.500H5.800M8.200 1h2.200a3.200 3.200 0 0 1 0 6.500H8.200M4 4.250H10" fill="none" stroke="#8e8e8e" stroke-width="1.300"/></svg>
<span style="position:absolute;left:920.5px;top:341.8px;font-size:14px;line-height:16px;color:#8e8e8e;white-space:nowrap;transform:scaleX(1.0561);transform-origin:0 50%;font-style:italic;">fx</span>
<svg style="left:931px;top:355px;" width="4" height="2.5" viewBox="0 0 4 2.5"><path d="M0 0h4L2 2.500z" fill="#8e8e8e"/></svg>
<svg style="left:945.5px;top:345.5px;" width="13.5" height="10.5" viewBox="0 0 13.5 10.5"><rect x="0" y="0" width="13.500" height="10.500" fill="#8e8e8e"/><circle cx="6.750" cy="5.250" r="3.300" fill="#535353"/></svg>
<svg style="left:974.5px;top:345px;" width="11.5" height="11.5" viewBox="0 0 11.5 11.5"><circle cx="5.750" cy="5.750" r="5.100" fill="none" stroke="#dedede" stroke-width="1.200"/><path fill="#dedede" d="M9.400 2.100A5.100 5.100 0 0 1 2.100 9.400z"/></svg>
<svg style="left:984px;top:356px;" width="4" height="2.5" viewBox="0 0 4 2.5"><path d="M0 0h4L2 2.500z" fill="#e0e0e0"/></svg>
<svg style="left:1000.5px;top:345px;" width="13" height="10.5" viewBox="0 0 13 10.5"><path fill="#dedede" d="M0 1c0-0.600 0.400-1 1-1h3.500l1.500 1.500H12c0.600 0 1 0.400 1 1v7c0 0.600-0.400 1-1 1H1c-0.600 0-1-0.400-1-1z"/></svg>
<svg style="left:1028.5px;top:345px;" width="11.5" height="11.5" viewBox="0 0 11.5 11.5"><rect x="0.600" y="0.600" width="10.300" height="10.300" fill="none" stroke="#e6e6e6" stroke-width="1.200"/><path d="M5.750 3V8.500M3 5.750H8.500" stroke="#e6e6e6" stroke-width="1.200"/></svg>
<svg style="left:1055px;top:344.5px;" width="11" height="13" viewBox="0 0 11 13"><path d="M0 2.600H11M3.800 2.600V0.600H7.200V2.600M1.300 2.600 1.800 12.400H9.200L9.700 2.600M4 4.500V10.500M5.500 4.500V10.500M7 4.500V10.500" fill="none" stroke="#8e8e8e" stroke-width="1"/></svg>
<div style="position:absolute;left:817px;top:363px;width:277px;height:2px;background:#383838;"></div>
<div style="position:absolute;left:817px;top:365px;width:277px;height:28px;background:#424242;"></div>
<div style="position:absolute;left:817px;top:365px;width:89.5px;height:28.5px;background:#535353;"></div>
<div style="position:absolute;left:906.5px;top:365px;width:1.0px;height:28px;background:#383838;"></div>
<div style="position:absolute;left:987px;top:365px;width:1px;height:28px;background:#383838;"></div>
<div style="position:absolute;left:1052px;top:365px;width:1px;height:28px;background:#383838;"></div>
<div style="position:absolute;left:907.5px;top:393px;width:186.5px;height:1px;background:#3c3c3c;"></div>
<span style="position:absolute;left:826px;top:372.1px;font-size:11.5px;line-height:15px;color:#f2f2f2;white-space:nowrap;font-weight:bold;transform:scaleX(0.9096);transform-origin:0 50%;">Eigenschaften</span>
<span style="position:absolute;left:916.5px;top:372.1px;font-size:11.5px;line-height:15px;color:#bdbdbd;white-space:nowrap;font-weight:bold;transform:scaleX(0.9343);transform-origin:0 50%;">Korrekturen</span>
<span style="position:absolute;left:997px;top:372.1px;font-size:11.5px;line-height:15px;color:#bdbdbd;white-space:nowrap;font-weight:bold;transform:scaleX(0.9350);transform-origin:0 50%;">Aktionen</span>
<svg style="left:1079px;top:376px;" width="10" height="7" viewBox="0 0 10 7"><path d="M0 0.500h10M0 2.500h10M0 4.500h10M0 6.500h10" stroke="#d0d0d0" stroke-width="1"/></svg>
<div style="position:absolute;left:827.5px;top:399.5px;width:23.0px;height:23.0px;background:#3a3a3a;border-radius:3px;border:1px solid #484848"></div>
<svg style="left:834px;top:404px;" width="10" height="13" viewBox="0 0 10 13"><path d="M0.600 0.600H6.200L9.400 3.800V12.400H0.600z" fill="none" stroke="#e6e6e6" stroke-width="1.200"/><path d="M6.200 0.600V3.800H9.400" fill="none" stroke="#e6e6e6" stroke-width="1"/></svg>
<span style="position:absolute;left:855.5px;top:404.1px;font-size:11px;line-height:14px;color:#e0e0e0;white-space:nowrap;transform:scaleX(0.9674);transform-origin:0 50%;">Dokument</span>
<div style="position:absolute;left:817px;top:427px;width:277px;height:1px;background:#454545;"></div>
<svg style="left:824px;top:440px;" width="8" height="5.5" viewBox="0 0 8 5.5"><path d="M0.500 0.700 4 4.500 7.500 0.700" fill="none" stroke="#d8d8d8" stroke-width="1.200"/></svg>
<span style="position:absolute;left:838.5px;top:436.3px;font-size:11.5px;line-height:15px;color:#f0f0f0;white-space:nowrap;font-weight:bold;transform:scaleX(0.8957);transform-origin:0 50%;">Leinwand</span>
<span style="position:absolute;left:867.5px;top:458.8px;font-size:11px;line-height:14px;color:#d8d8d8;white-space:nowrap;transform:scaleX(0.8669);transform-origin:0 50%;">W</span>
<div class="inp" style="position:absolute;left:881px;top:458px;width:54px;height:16.5px;background:#454545;"></div>
<span style="position:absolute;left:885.5px;top:458.8px;font-size:11px;line-height:14px;color:#f0f0f0;white-space:nowrap;transform:scaleX(0.9786);transform-origin:0 50%;">4032 Px</span>
<span style="position:absolute;left:947.5px;top:458.8px;font-size:11px;line-height:14px;color:#d8d8d8;white-space:nowrap;transform:scaleX(0.9541);transform-origin:0 50%;">X</span>
<div class="inp dis" style="position:absolute;left:959.5px;top:458px;width:54.5px;height:16.5px;background:#505050;"></div>
<span style="position:absolute;left:964px;top:458.8px;font-size:11px;line-height:14px;color:#757575;white-space:nowrap;transform:scaleX(0.9541);transform-origin:0 50%;">0 Px</span>
<span style="position:absolute;left:868.5px;top:482.8px;font-size:11px;line-height:14px;color:#d8d8d8;white-space:nowrap;transform:scaleX(0.9441);transform-origin:0 50%;">H</span>
<div class="inp" style="position:absolute;left:881px;top:482px;width:54px;height:16.5px;background:#454545;"></div>
<span style="position:absolute;left:885.5px;top:482.8px;font-size:11px;line-height:14px;color:#f0f0f0;white-space:nowrap;transform:scaleX(0.9786);transform-origin:0 50%;">2688 Px</span>
<span style="position:absolute;left:947.5px;top:482.8px;font-size:11px;line-height:14px;color:#d8d8d8;white-space:nowrap;transform:scaleX(0.9541);transform-origin:0 50%;">Y</span>
<div class="inp dis" style="position:absolute;left:959.5px;top:482px;width:54.5px;height:16.5px;background:#505050;"></div>
<span style="position:absolute;left:964px;top:482.8px;font-size:11px;line-height:14px;color:#757575;white-space:nowrap;transform:scaleX(0.9541);transform-origin:0 50%;">0 Px</span>
<svg style="left:835.5px;top:471px;" width="8.5" height="15" viewBox="0 0 8.5 15"><rect x="1.200" y="0.800" width="6.100" height="7.400" rx="3" fill="none" stroke="#e0e0e0" stroke-width="1.500"/><rect x="1.200" y="6.800" width="6.100" height="7.400" rx="3" fill="none" stroke="#e0e0e0" stroke-width="1.500"/><path d="M4.250 5.500V9.500" stroke="#e0e0e0" stroke-width="1.500"/></svg>
<svg style="left:888px;top:514px;" width="14" height="16" viewBox="0 0 14 16"><rect x="0.600" y="0.600" width="12.800" height="14.800" fill="none" stroke="#e0e0e0" stroke-width="1.200"/><circle cx="7" cy="5.500" r="2.100" fill="#e0e0e0"/><path fill="#e0e0e0" d="M3.500 15V10.500c0-1.300 1-2.200 2.200-2.200h2.600c1.200 0 2.200 0.900 2.200 2.200V15z"/></svg>
<div style="position:absolute;left:908px;top:509.3px;width:25.8px;height:25.5px;background:#363636;border-radius:3.500px;border:1px solid #555"></div>
<svg style="left:913px;top:515.5px;" width="16" height="13" viewBox="0 0 16 13"><rect x="0.600" y="0.600" width="14.800" height="11.800" fill="none" stroke="#e0e0e0" stroke-width="1.200"/><circle cx="8" cy="4.700" r="2" fill="#e0e0e0"/><path fill="#e0e0e0" d="M4.300 12V9.300c0-1.200 0.900-2 2-2h3.400c1.100 0 2 0.800 2 2V12z"/></svg>
<span style="position:absolute;left:882px;top:543.8px;font-size:11px;line-height:14px;color:#e0e0e0;white-space:nowrap;transform:scaleX(0.9953);transform-origin:0 50%;">Auflösung: 300 Pixel/Zoll</span>
<span style="position:absolute;left:844.5px;top:569.8px;font-size:11px;line-height:14px;color:#d8d8d8;white-space:nowrap;transform:scaleX(0.9541);transform-origin:0 50%;">Modus</span>
<div class="inp" style="position:absolute;left:882px;top:568.5px;width:131.5px;height:18.0px;background:#454545;border-radius:3px"></div>
<span style="position:absolute;left:889.5px;top:569.8px;font-size:11px;line-height:14px;color:#f0f0f0;white-space:nowrap;transform:scaleX(0.9425);transform-origin:0 50%;">RGB-Farbe</span>
<svg style="left:1002px;top:575.5px;" width="7" height="5" viewBox="0 0 7 5"><path d="M0.500 0.700 3.500 3.700 6.500 0.700" fill="none" stroke="#e0e0e0" stroke-width="1.200"/></svg>
<div style="position:absolute;left:1080px;top:428px;width:14px;height:162px;background:#4a4a4a;"></div>
<div style="position:absolute;left:1082.5px;top:431px;width:9.0px;height:55.5px;background:#6b6b6b;border-radius:4.500px"></div>
<div style="position:absolute;left:817px;top:616px;width:277px;height:2.5px;background:#383838;"></div>
<div style="position:absolute;left:817px;top:618.5px;width:277px;height:28.0px;background:#424242;"></div>
<div style="position:absolute;left:870px;top:618.5px;width:1px;height:28.0px;background:#383838;"></div>
<div style="position:absolute;left:871px;top:618.5px;width:47.5px;height:28.5px;background:#535353;"></div>
<div style="position:absolute;left:918.5px;top:618.5px;width:1.0px;height:28.0px;background:#383838;"></div>
<div style="position:absolute;left:817px;top:646px;width:54px;height:1px;background:#3c3c3c;"></div>
<div style="position:absolute;left:919.5px;top:646px;width:174.5px;height:1px;background:#3c3c3c;"></div>
<span style="position:absolute;left:826px;top:625.1px;font-size:11.5px;line-height:15px;color:#bdbdbd;white-space:nowrap;font-weight:bold;transform:scaleX(0.9016);transform-origin:0 50%;">Kanäle</span>
<span style="position:absolute;left:880px;top:625.1px;font-size:11.5px;line-height:15px;color:#f2f2f2;white-space:nowrap;font-weight:bold;transform:scaleX(0.9101);transform-origin:0 50%;">Pfade</span>
<svg style="left:1079px;top:629px;" width="10" height="7" viewBox="0 0 10 7"><path d="M0 0.500h10M0 2.500h10M0 4.500h10M0 6.500h10" stroke="#d0d0d0" stroke-width="1"/></svg>
<div style="position:absolute;left:817px;top:652px;width:261px;height:82px;background:#4d4d4d;"></div>
<div style="position:absolute;left:1078px;top:652px;width:16px;height:82px;background:#505050;"></div>
<div style="position:absolute;left:817px;top:734px;width:277px;height:1px;background:#454545;"></div>
<svg style="left:891px;top:740.5px;" width="10" height="10" viewBox="0 0 10 10"><circle cx="5" cy="5" r="4.900" fill="#9a9a9a"/></svg>
<svg style="left:918px;top:741.5px;" width="10" height="10" viewBox="0 0 10 10"><circle cx="5" cy="5" r="4.300" fill="none" stroke="#9a9a9a" stroke-width="1.200"/></svg>
<svg style="left:944.5px;top:740.5px;" width="10.5" height="10.5" viewBox="0 0 10.5 10.5"><circle cx="5.250" cy="5.250" r="4.600" fill="none" stroke="#9a9a9a" stroke-width="1.200" stroke-dasharray="1.600 1.300"/></svg>
<svg style="left:970px;top:739.5px;" width="13" height="13" viewBox="0 0 13 13"><circle cx="6.500" cy="6.500" r="4.600" fill="none" stroke="#9a9a9a" stroke-width="1.200"/><g fill="#535353" stroke="#9a9a9a" stroke-width="0.900"><rect x="5.100" y="0.500" width="2.800" height="2.800"/><rect x="5.100" y="9.700" width="2.800" height="2.800"/><rect x="0.500" y="5.100" width="2.800" height="2.800"/><rect x="9.700" y="5.100" width="2.800" height="2.800"/></g></svg>
<svg style="left:997px;top:740.5px;" width="13" height="10" viewBox="0 0 13 10"><rect x="0" y="0" width="13" height="10" fill="#9a9a9a"/><circle cx="6.500" cy="5" r="3.200" fill="#535353"/></svg>
<svg style="left:1029px;top:740px;" width="11.5" height="11.5" viewBox="0 0 11.5 11.5"><rect x="0.600" y="0.600" width="10.300" height="10.300" fill="none" stroke="#e6e6e6" stroke-width="1.200"/><path d="M5.750 3V8.500M3 5.750H8.500" stroke="#e6e6e6" stroke-width="1.200"/></svg>
<svg style="left:1055px;top:739.5px;" width="11" height="13" viewBox="0 0 11 13"><path d="M0 2.600H11M3.800 2.600V0.600H7.200V2.600M1.300 2.600 1.800 12.400H9.200L9.700 2.600M4 4.500V10.500M5.500 4.500V10.500M7 4.500V10.500" fill="none" stroke="#8e8e8e" stroke-width="1"/></svg>
<div style="position:absolute;left:1px;top:759px;width:1094px;height:1px;background:#404040;"></div>
</div>
</body>
</html>
